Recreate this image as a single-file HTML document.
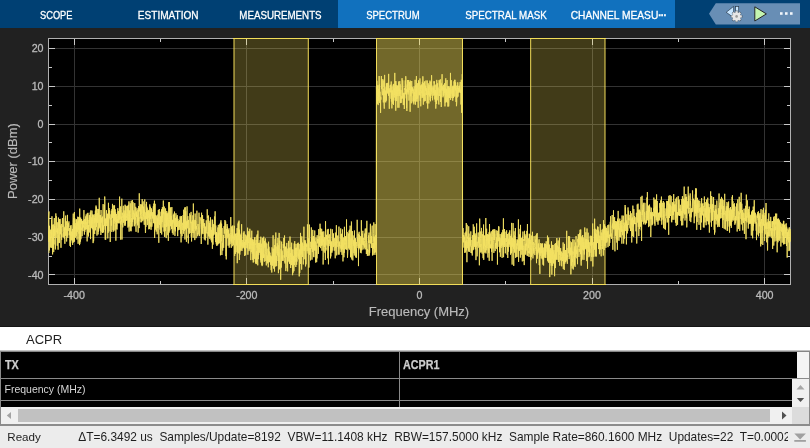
<!DOCTYPE html>
<html><head><meta charset="utf-8"><title>Spectrum Analyzer</title>
<style>
html,body{margin:0;padding:0}
body{-webkit-font-smoothing:antialiased;width:810px;height:448px;position:relative;overflow:hidden;background:#212121;font-family:"Liberation Sans",Arial,sans-serif}
.abs{position:absolute}
#status,#tbl,#acprbar,#plot,#tb{will-change:transform}
#tb{left:0;top:0;width:810px;height:28px;background:#004073}
#sel{left:338px;top:0;width:337px;height:28px;background:#1171be}
.tab{position:absolute;top:0;width:120px;height:28px;line-height:31px;text-align:center;color:#fff;font-size:11px;white-space:nowrap;-webkit-text-stroke:0.3px #fff}
.tl{display:inline-block;transform-origin:50% 50%}
#qa{left:709px;top:3px;width:91px;height:22px}
#acprbar{left:0;top:327px;width:810px;height:23px;background:#fff;color:#222;font-size:13px;line-height:25px}
#tbl{left:0;top:351px;width:810px;height:56px;background:#000}
.gl{position:absolute;background:#8a8a8a}
.cell{position:absolute;color:#d6d6d6;font-size:10.5px;white-space:nowrap}
#hs{left:1px;top:407px;width:808px;height:17px;background:#f0f0f0}
#status{left:0;top:426px;width:810px;height:22px;background:#ececec;color:#1e1e1e;font-size:11.91px;line-height:22px;white-space:nowrap}
</style></head><body>
<div class="abs" id="tb">
<div class="abs" id="sel"></div>
<span class="tab" style="left:-3.7px"><span class="tl" style="transform:scaleX(0.8439)">SCOPE</span></span>
<span class="tab" style="left:108.3px"><span class="tl" style="transform:scaleX(0.9155)">ESTIMATION</span></span>
<span class="tab" style="left:220.2px"><span class="tl" style="transform:scaleX(0.8859)">MEASUREMENTS</span></span>
<span class="tab" style="left:333.3px"><span class="tl" style="transform:scaleX(0.8651)">SPECTRUM</span></span>
<span class="tab" style="left:445.6px"><span class="tl" style="transform:scaleX(0.8869)">SPECTRAL MASK</span></span>
<span class="tab" style="left:558.6px"><span class="tl" style="transform:scaleX(0.9286)">CHANNEL MEASU<b style="letter-spacing:-0.9px">···</b></span></span>
<svg class="abs" id="qa" width="91" height="22" viewBox="709 3 91 22">
<path d="M709 13.8L715.8 3.2H800V24.5H715.8Z" fill="#688eb5"/>
<path d="M733.6 6.4L726.2 12.3L733.6 17.6Z" fill="#c8e6ff" stroke="#2a3a4a" stroke-width="0.7" stroke-linejoin="round"/>
<rect x="735.6" y="6.4" width="3.1" height="7" fill="#c8e6ff" stroke="#2a3a4a" stroke-width="0.7"/>
<g transform="translate(736.6 16.4)"><g fill="#4a5a6a" transform="scale(1.12)"><circle r="3.9"/><rect x="-1.1" y="-5.2" width="2.2" height="3" transform="rotate(0)"/><rect x="-1.1" y="-5.2" width="2.2" height="3" transform="rotate(45)"/><rect x="-1.1" y="-5.2" width="2.2" height="3" transform="rotate(90)"/><rect x="-1.1" y="-5.2" width="2.2" height="3" transform="rotate(135)"/><rect x="-1.1" y="-5.2" width="2.2" height="3" transform="rotate(180)"/><rect x="-1.1" y="-5.2" width="2.2" height="3" transform="rotate(225)"/><rect x="-1.1" y="-5.2" width="2.2" height="3" transform="rotate(270)"/><rect x="-1.1" y="-5.2" width="2.2" height="3" transform="rotate(315)"/></g><g fill="#e6e6e6"><circle r="3.9"/><rect x="-1.1" y="-5.2" width="2.2" height="3" transform="rotate(0)"/><rect x="-1.1" y="-5.2" width="2.2" height="3" transform="rotate(45)"/><rect x="-1.1" y="-5.2" width="2.2" height="3" transform="rotate(90)"/><rect x="-1.1" y="-5.2" width="2.2" height="3" transform="rotate(135)"/><rect x="-1.1" y="-5.2" width="2.2" height="3" transform="rotate(180)"/><rect x="-1.1" y="-5.2" width="2.2" height="3" transform="rotate(225)"/><rect x="-1.1" y="-5.2" width="2.2" height="3" transform="rotate(270)"/><rect x="-1.1" y="-5.2" width="2.2" height="3" transform="rotate(315)"/></g><circle r="1.3" fill="#9a9a9a"/></g>
<path d="M754.8 6.8L766.4 13.9L754.8 21Z" fill="#c4f5b0" stroke="#262626" stroke-width="1" stroke-linejoin="round"/>
<rect x="780" y="12.2" width="2.6" height="2.6" fill="#f2f6fa"/><rect x="785" y="12.2" width="2.6" height="2.6" fill="#f2f6fa"/><rect x="790" y="12.2" width="2.6" height="2.6" fill="#f2f6fa"/>
</svg>
</div>
<svg width="810" height="300" viewBox="0 28 810 300" id="plot" style="position:absolute;left:0;top:28px">
<rect x="0" y="28" width="810" height="300" fill="#212121"/>
<rect x="48" y="38" width="743" height="247" fill="#000"/>
<path d="M49 48.5H790 M49 86.5H790 M49 124.5H790 M49 161.5H790 M49 199.5H790 M49 237.5H790 M49 274.5H790 M74.5 39V284 M246.5 39V284 M419.5 39V284 M592.5 39V284 M764.5 39V284" stroke="#333333" stroke-width="1" fill="none" shape-rendering="crispEdges"/>
<path d="M49 48.5h6M790 48.5h-6 M49 67.5h3M790 67.5h-3 M49 86.5h6M790 86.5h-6 M49 105.5h3M790 105.5h-3 M49 124.5h6M790 124.5h-6 M49 142.5h3M790 142.5h-3 M49 161.5h6M790 161.5h-6 M49 180.5h3M790 180.5h-3 M49 199.5h6M790 199.5h-6 M49 218.5h3M790 218.5h-3 M49 237.5h6M790 237.5h-6 M49 256.5h3M790 256.5h-3 M49 274.5h6M790 274.5h-6 M74.5 39v6M74.5 284v-6 M160.5 39v3M160.5 284v-3 M246.5 39v6M246.5 284v-6 M333.5 39v3M333.5 284v-3 M419.5 39v6M419.5 284v-6 M505.5 39v3M505.5 284v-3 M592.5 39v6M592.5 284v-6 M678.5 39v3M678.5 284v-3 M764.5 39v6M764.5 284v-6" stroke="#c8c8c8" stroke-width="1" fill="none" shape-rendering="crispEdges"/>
<rect x="234" y="38.5" width="74.3" height="246" fill="#f2dd5a" fill-opacity="0.265"/>
<rect x="530.65" y="38.5" width="74.35" height="246" fill="#f2dd5a" fill-opacity="0.265"/>
<rect x="376.5" y="38.5" width="86" height="246" fill="#f2dd5a" fill-opacity="0.47"/>
<path d="M48.5 38.5H790.5V284.5H48.5Z" stroke="#b0b0b0" stroke-width="1" fill="none" shape-rendering="crispEdges"/>
<path d="M234 284.5V38.5M308.3 38.5V284.5M530.65 284.5V38.5M605 38.5V284.5" stroke="#f2dd5a" stroke-opacity="0.95" stroke-width="1.05" fill="none"/>
<path d="M233 38.5H309M530 38.5H606M233 284.5H309M530 284.5H606" stroke="#f2dd5a" stroke-width="1" fill="none" shape-rendering="crispEdges"/>
<path d="M376.5 284.5V38.5H462.5V284.5Z" stroke="#f2dd5a" stroke-width="1" fill="none" shape-rendering="crispEdges"/>
<clipPath id="cp"><rect x="48" y="39" width="743" height="245"/></clipPath>
<path d="M49 253 L49 211.5 L48.24 220.1 L48.40 239.2 L48.56 234.8 L48.73 231.4 L48.89 242.0 L49.05 234.9 L49.21 234.9 L49.37 250.4 L49.53 225.8 L49.69 229.5 L49.86 240.3 L50.02 236.2 L50.18 230.2 L50.34 237.0 L50.50 236.8 L50.66 247.4 L50.82 229.6 L50.98 233.4 L51.15 232.0 L51.31 247.9 L51.47 219.7 L51.63 233.0 L51.79 237.7 L51.95 216.3 L52.11 234.6 L52.28 247.0 L52.44 237.7 L52.60 254.4 L52.76 224.8 L52.92 237.7 L53.08 240.6 L53.24 224.4 L53.41 248.5 L53.57 229.1 L53.73 252.1 L53.89 239.7 L54.05 244.4 L54.21 220.8 L54.37 218.0 L54.54 236.6 L54.70 226.1 L54.86 235.1 L55.02 228.5 L55.18 240.1 L55.34 248.6 L55.50 249.4 L55.67 230.0 L55.83 213.4 L55.99 230.9 L56.15 237.9 L56.31 216.2 L56.47 231.1 L56.63 232.2 L56.80 230.8 L56.96 234.2 L57.12 235.7 L57.28 245.7 L57.44 228.5 L57.60 233.7 L57.76 222.3 L57.93 236.1 L58.09 249.7 L58.25 233.6 L58.41 217.6 L58.57 236.0 L58.73 240.5 L58.89 243.1 L59.06 241.8 L59.22 235.1 L59.38 242.9 L59.54 219.1 L59.70 234.9 L59.86 231.3 L60.02 219.5 L60.19 218.9 L60.35 234.1 L60.51 229.2 L60.67 225.6 L60.83 233.8 L60.99 247.8 L61.15 226.2 L61.32 224.0 L61.48 228.2 L61.64 240.0 L61.80 233.6 L61.96 237.0 L62.12 234.4 L62.28 220.2 L62.44 218.1 L62.61 225.7 L62.77 226.7 L62.93 225.5 L63.09 231.6 L63.25 232.1 L63.41 237.4 L63.57 231.9 L63.74 211.3 L63.90 223.6 L64.06 234.3 L64.22 235.4 L64.38 238.8 L64.54 227.8 L64.70 227.6 L64.87 243.8 L65.03 226.7 L65.19 236.0 L65.35 218.3 L65.51 229.5 L65.67 215.6 L65.83 234.8 L66.00 233.3 L66.16 228.0 L66.32 221.3 L66.48 225.6 L66.64 241.5 L66.80 228.9 L66.96 230.3 L67.13 234.2 L67.29 236.1 L67.45 214.9 L67.61 233.8 L67.77 237.8 L67.93 224.6 L68.09 229.0 L68.26 230.8 L68.42 223.2 L68.58 225.7 L68.74 226.8 L68.90 221.4 L69.06 227.4 L69.22 235.3 L69.39 233.0 L69.55 234.4 L69.71 227.9 L69.87 239.3 L70.03 245.9 L70.19 228.8 L70.35 241.4 L70.52 246.8 L70.68 226.2 L70.84 235.7 L71.00 225.0 L71.16 234.1 L71.32 239.3 L71.48 240.3 L71.65 233.8 L71.81 231.6 L71.97 236.4 L72.13 231.6 L72.29 242.7 L72.45 228.9 L72.61 244.9 L72.78 230.6 L72.94 222.7 L73.10 219.1 L73.26 213.6 L73.42 242.5 L73.58 222.0 L73.74 218.0 L73.90 219.9 L74.07 236.8 L74.23 224.9 L74.39 212.0 L74.55 241.7 L74.71 224.2 L74.87 218.5 L75.03 234.5 L75.20 223.1 L75.36 237.7 L75.52 235.4 L75.68 235.4 L75.84 226.4 L76.00 228.8 L76.16 219.5 L76.33 236.3 L76.49 229.0 L76.65 219.3 L76.81 222.8 L76.97 239.5 L77.13 221.8 L77.29 231.9 L77.46 224.2 L77.62 224.9 L77.78 216.7 L77.94 226.4 L78.10 243.8 L78.26 239.5 L78.42 220.8 L78.59 229.5 L78.75 217.1 L78.91 224.7 L79.07 233.7 L79.23 217.5 L79.39 234.2 L79.55 245.1 L79.72 208.6 L79.88 243.8 L80.04 221.2 L80.20 218.4 L80.36 225.4 L80.52 241.6 L80.68 217.6 L80.85 239.3 L81.01 238.4 L81.17 229.6 L81.33 219.4 L81.49 223.7 L81.65 219.1 L81.81 230.2 L81.98 227.7 L82.14 236.2 L82.30 228.9 L82.46 220.8 L82.62 228.6 L82.78 221.7 L82.94 231.0 L83.11 231.1 L83.27 225.4 L83.43 227.4 L83.59 220.4 L83.75 224.0 L83.91 210.1 L84.07 227.5 L84.24 227.5 L84.40 234.6 L84.56 225.2 L84.72 219.2 L84.88 231.8 L85.04 225.6 L85.20 218.8 L85.36 226.2 L85.53 229.6 L85.69 216.4 L85.85 224.1 L86.01 221.4 L86.17 214.4 L86.33 214.6 L86.49 227.8 L86.66 229.3 L86.82 222.1 L86.98 225.7 L87.14 241.4 L87.30 213.2 L87.46 224.2 L87.62 217.8 L87.79 234.7 L87.95 212.8 L88.11 229.4 L88.27 225.1 L88.43 236.5 L88.59 225.5 L88.75 226.0 L88.92 225.6 L89.08 220.0 L89.24 223.3 L89.40 215.1 L89.56 227.9 L89.72 232.5 L89.88 223.8 L90.05 218.0 L90.21 212.5 L90.37 216.3 L90.53 239.1 L90.69 220.0 L90.85 210.4 L91.01 222.7 L91.18 227.8 L91.34 220.4 L91.50 227.6 L91.66 217.4 L91.82 223.1 L91.98 210.6 L92.14 218.5 L92.31 229.3 L92.47 217.5 L92.63 214.5 L92.79 227.8 L92.95 226.4 L93.11 243.1 L93.27 214.6 L93.44 227.7 L93.60 241.3 L93.76 238.1 L93.92 224.3 L94.08 215.6 L94.24 223.1 L94.40 218.0 L94.57 231.9 L94.73 234.0 L94.89 214.2 L95.05 217.7 L95.21 222.3 L95.37 210.6 L95.53 230.3 L95.70 225.6 L95.86 212.7 L96.02 205.5 L96.18 221.6 L96.34 206.8 L96.50 227.0 L96.66 218.6 L96.82 223.1 L96.99 235.6 L97.15 219.1 L97.31 213.1 L97.47 222.7 L97.63 221.9 L97.79 208.9 L97.95 232.3 L98.12 234.4 L98.28 226.9 L98.44 231.7 L98.60 209.1 L98.76 218.2 L98.92 228.6 L99.08 226.4 L99.25 197.8 L99.41 226.2 L99.57 227.5 L99.73 218.0 L99.89 215.0 L100.05 218.7 L100.21 228.7 L100.38 230.8 L100.54 215.2 L100.70 221.0 L100.86 235.0 L101.02 210.0 L101.18 213.5 L101.34 222.5 L101.51 222.6 L101.67 218.2 L101.83 226.3 L101.99 232.1 L102.15 217.3 L102.31 232.9 L102.47 216.6 L102.64 232.8 L102.80 220.9 L102.96 221.2 L103.12 204.1 L103.28 229.3 L103.44 232.4 L103.60 225.5 L103.77 229.7 L103.93 224.9 L104.09 215.9 L104.25 212.8 L104.41 204.9 L104.57 226.1 L104.73 196.5 L104.90 201.9 L105.06 221.2 L105.22 239.7 L105.38 220.1 L105.54 218.7 L105.70 239.7 L105.86 218.6 L106.03 221.0 L106.19 226.1 L106.35 213.6 L106.51 210.2 L106.67 223.3 L106.83 216.9 L106.99 224.7 L107.16 225.9 L107.32 218.2 L107.48 214.2 L107.64 223.8 L107.80 238.4 L107.96 213.5 L108.12 232.8 L108.28 217.5 L108.45 202.8 L108.61 218.7 L108.77 229.0 L108.93 231.4 L109.09 208.0 L109.25 218.5 L109.41 213.5 L109.58 210.1 L109.74 218.7 L109.90 220.9 L110.06 226.5 L110.22 242.0 L110.38 231.5 L110.54 218.6 L110.71 219.5 L110.87 214.4 L111.03 219.0 L111.19 216.4 L111.35 210.8 L111.51 225.6 L111.67 220.3 L111.84 231.9 L112.00 209.0 L112.16 217.3 L112.32 213.2 L112.48 203.9 L112.64 207.9 L112.80 218.0 L112.97 210.4 L113.13 230.1 L113.29 213.5 L113.45 216.1 L113.61 231.6 L113.77 205.4 L113.93 223.4 L114.10 211.1 L114.26 220.8 L114.42 208.3 L114.58 205.4 L114.74 224.3 L114.90 230.5 L115.06 218.1 L115.23 209.3 L115.39 220.1 L115.55 222.2 L115.71 212.4 L115.87 240.7 L116.03 222.6 L116.19 228.9 L116.36 214.0 L116.52 223.1 L116.68 226.4 L116.84 219.6 L117.00 229.5 L117.16 216.6 L117.32 222.5 L117.49 219.7 L117.65 222.7 L117.81 208.2 L117.97 217.2 L118.13 211.6 L118.29 212.0 L118.45 223.3 L118.62 211.1 L118.78 213.0 L118.94 213.3 L119.10 219.6 L119.26 219.8 L119.42 209.0 L119.58 196.6 L119.74 223.3 L119.91 211.2 L120.07 219.1 L120.23 208.9 L120.39 211.9 L120.55 206.4 L120.71 239.7 L120.87 221.1 L121.04 224.5 L121.20 216.6 L121.36 222.1 L121.52 221.3 L121.68 209.5 L121.84 198.7 L122.00 239.5 L122.17 218.3 L122.33 212.7 L122.49 215.4 L122.65 218.5 L122.81 227.4 L122.97 223.8 L123.13 209.0 L123.30 205.8 L123.46 214.5 L123.62 222.7 L123.78 214.5 L123.94 217.4 L124.10 210.4 L124.26 214.2 L124.43 220.7 L124.59 213.5 L124.75 225.6 L124.91 207.9 L125.07 204.7 L125.23 225.6 L125.39 211.4 L125.56 223.9 L125.72 205.6 L125.88 207.1 L126.04 217.1 L126.20 206.2 L126.36 218.9 L126.52 220.7 L126.69 220.1 L126.85 216.3 L127.01 217.9 L127.17 213.6 L127.33 220.4 L127.49 208.2 L127.65 205.9 L127.82 219.4 L127.98 227.6 L128.14 208.5 L128.30 204.9 L128.46 216.4 L128.62 226.4 L128.78 212.6 L128.95 201.4 L129.11 231.6 L129.27 210.7 L129.43 217.7 L129.59 222.5 L129.75 210.5 L129.91 226.5 L130.08 212.3 L130.24 203.3 L130.40 213.4 L130.56 222.7 L130.72 230.7 L130.88 226.3 L131.04 231.3 L131.20 200.8 L131.37 217.2 L131.53 224.2 L131.69 226.5 L131.85 224.4 L132.01 218.0 L132.17 226.4 L132.33 200.1 L132.50 221.6 L132.66 222.0 L132.82 212.3 L132.98 202.2 L133.14 203.3 L133.30 219.4 L133.46 212.8 L133.63 213.7 L133.79 210.4 L133.95 212.8 L134.11 223.5 L134.27 226.3 L134.43 213.6 L134.59 225.6 L134.76 203.1 L134.92 214.8 L135.08 224.3 L135.24 218.0 L135.40 219.7 L135.56 216.4 L135.72 206.8 L135.89 228.0 L136.05 231.8 L136.21 212.3 L136.37 216.8 L136.53 213.8 L136.69 211.4 L136.85 216.9 L137.02 208.2 L137.18 223.3 L137.34 214.8 L137.50 222.7 L137.66 225.4 L137.82 209.9 L137.98 210.4 L138.15 232.6 L138.31 225.4 L138.47 212.9 L138.63 206.0 L138.79 221.4 L138.95 217.2 L139.11 228.1 L139.28 193.3 L139.44 211.4 L139.60 207.7 L139.76 209.8 L139.92 207.4 L140.08 210.3 L140.24 218.6 L140.41 209.1 L140.57 215.0 L140.73 204.2 L140.89 222.3 L141.05 220.6 L141.21 209.9 L141.37 204.5 L141.54 214.6 L141.70 222.2 L141.86 216.9 L142.02 220.3 L142.18 199.1 L142.34 208.0 L142.50 204.8 L142.66 213.3 L142.83 220.9 L142.99 205.7 L143.15 201.4 L143.31 210.9 L143.47 216.3 L143.63 206.6 L143.79 219.5 L143.96 209.4 L144.12 222.5 L144.28 224.8 L144.44 211.2 L144.60 213.3 L144.76 199.4 L144.92 218.8 L145.09 216.2 L145.25 226.5 L145.41 233.0 L145.57 232.2 L145.73 212.4 L145.89 226.9 L146.05 206.5 L146.22 203.9 L146.38 219.1 L146.54 201.9 L146.70 214.6 L146.86 206.7 L147.02 218.7 L147.18 208.2 L147.35 225.1 L147.51 211.3 L147.67 220.9 L147.83 218.0 L147.99 211.3 L148.15 215.4 L148.31 217.6 L148.48 210.5 L148.64 209.9 L148.80 229.3 L148.96 212.1 L149.12 211.1 L149.28 223.8 L149.44 213.7 L149.61 228.9 L149.77 204.4 L149.93 219.3 L150.09 217.9 L150.25 206.7 L150.41 218.6 L150.57 212.0 L150.74 226.6 L150.90 222.4 L151.06 229.8 L151.22 219.3 L151.38 208.3 L151.54 215.5 L151.70 209.7 L151.87 226.7 L152.03 225.4 L152.19 221.8 L152.35 212.6 L152.51 214.5 L152.67 217.9 L152.83 212.2 L153.00 219.1 L153.16 218.0 L153.32 206.3 L153.48 223.1 L153.64 216.3 L153.80 203.6 L153.96 217.1 L154.12 211.7 L154.29 223.4 L154.45 200.7 L154.61 238.0 L154.77 228.2 L154.93 227.5 L155.09 203.8 L155.25 215.1 L155.42 220.6 L155.58 229.6 L155.74 215.1 L155.90 217.3 L156.06 224.5 L156.22 231.6 L156.38 228.2 L156.55 216.6 L156.71 215.7 L156.87 217.9 L157.03 219.9 L157.19 234.3 L157.35 218.2 L157.51 227.8 L157.68 218.3 L157.84 214.6 L158.00 224.7 L158.16 227.8 L158.32 210.0 L158.48 215.7 L158.64 224.5 L158.81 242.8 L158.97 219.4 L159.13 213.4 L159.29 209.0 L159.45 225.0 L159.61 224.8 L159.77 223.0 L159.94 211.7 L160.10 229.6 L160.26 220.2 L160.42 227.4 L160.58 216.9 L160.74 233.0 L160.90 216.0 L161.07 223.7 L161.23 221.3 L161.39 214.7 L161.55 209.3 L161.71 234.5 L161.87 210.6 L162.03 214.6 L162.20 222.1 L162.36 207.1 L162.52 217.9 L162.68 208.2 L162.84 224.9 L163.00 227.4 L163.16 208.9 L163.33 200.6 L163.49 214.1 L163.65 211.9 L163.81 224.0 L163.97 231.6 L164.13 221.9 L164.29 206.6 L164.46 236.4 L164.62 224.4 L164.78 237.0 L164.94 219.1 L165.10 212.3 L165.26 231.1 L165.42 223.7 L165.59 208.4 L165.75 221.0 L165.91 231.2 L166.07 231.9 L166.23 238.1 L166.39 213.4 L166.55 226.9 L166.71 211.0 L166.88 212.7 L167.04 226.3 L167.20 225.1 L167.36 213.6 L167.52 219.2 L167.68 218.2 L167.84 235.2 L168.01 212.6 L168.17 228.4 L168.33 240.8 L168.49 226.2 L168.65 217.0 L168.81 202.2 L168.97 224.1 L169.14 232.6 L169.30 202.0 L169.46 219.5 L169.62 223.2 L169.78 230.5 L169.94 229.9 L170.10 207.9 L170.27 223.5 L170.43 225.9 L170.59 225.6 L170.75 207.3 L170.91 226.4 L171.07 215.7 L171.23 218.9 L171.40 219.2 L171.56 229.1 L171.72 215.5 L171.88 207.1 L172.04 221.9 L172.20 229.6 L172.36 232.9 L172.53 219.8 L172.69 224.0 L172.85 222.5 L173.01 221.5 L173.17 234.7 L173.33 214.8 L173.49 219.7 L173.66 222.4 L173.82 219.7 L173.98 213.6 L174.14 221.4 L174.30 229.4 L174.46 211.6 L174.62 225.8 L174.79 228.4 L174.95 235.9 L175.11 222.0 L175.27 231.4 L175.43 226.8 L175.59 218.2 L175.75 221.9 L175.92 213.3 L176.08 219.6 L176.24 225.9 L176.40 225.3 L176.56 226.9 L176.72 216.7 L176.88 222.3 L177.05 226.2 L177.21 215.1 L177.37 221.7 L177.53 226.8 L177.69 236.1 L177.85 218.8 L178.01 220.6 L178.17 222.3 L178.34 226.7 L178.50 230.2 L178.66 224.9 L178.82 220.9 L178.98 224.1 L179.14 224.3 L179.30 227.2 L179.47 220.1 L179.63 221.0 L179.79 229.8 L179.95 216.5 L180.11 216.2 L180.27 216.1 L180.43 224.5 L180.60 225.1 L180.76 233.7 L180.92 216.7 L181.08 242.4 L181.24 227.0 L181.40 226.6 L181.56 216.0 L181.73 223.6 L181.89 232.2 L182.05 236.3 L182.21 230.2 L182.37 222.8 L182.53 223.3 L182.69 225.6 L182.86 230.0 L183.02 225.8 L183.18 215.1 L183.34 233.8 L183.50 223.7 L183.66 209.7 L183.82 219.2 L183.99 228.2 L184.15 218.3 L184.31 230.9 L184.47 224.2 L184.63 210.5 L184.79 207.6 L184.95 239.5 L185.12 218.2 L185.28 207.2 L185.44 229.4 L185.60 222.3 L185.76 211.2 L185.92 229.0 L186.08 220.7 L186.25 225.2 L186.41 241.8 L186.57 221.7 L186.73 226.5 L186.89 216.7 L187.05 206.4 L187.21 218.9 L187.38 228.3 L187.54 221.1 L187.70 223.3 L187.86 216.1 L188.02 237.9 L188.18 235.5 L188.34 243.4 L188.51 219.9 L188.67 225.5 L188.83 231.0 L188.99 231.8 L189.15 230.5 L189.31 233.7 L189.47 228.4 L189.63 230.0 L189.80 213.3 L189.96 222.8 L190.12 233.0 L190.28 230.9 L190.44 215.2 L190.60 221.8 L190.76 223.2 L190.93 219.5 L191.09 211.9 L191.25 236.8 L191.41 232.6 L191.57 241.5 L191.73 221.7 L191.89 229.5 L192.06 232.2 L192.22 233.0 L192.38 220.2 L192.54 227.6 L192.70 231.1 L192.86 215.3 L193.02 235.7 L193.19 237.7 L193.35 203.5 L193.51 229.8 L193.67 231.4 L193.83 233.1 L193.99 227.9 L194.15 219.8 L194.32 220.1 L194.48 222.0 L194.64 229.3 L194.80 240.1 L194.96 224.4 L195.12 213.5 L195.28 217.6 L195.45 228.6 L195.61 220.0 L195.77 230.6 L195.93 227.7 L196.09 238.2 L196.25 230.1 L196.41 226.1 L196.58 228.9 L196.74 220.6 L196.90 210.7 L197.06 215.8 L197.22 230.2 L197.38 234.1 L197.54 233.4 L197.71 236.3 L197.87 227.4 L198.03 224.0 L198.19 226.2 L198.35 226.1 L198.51 226.5 L198.67 229.1 L198.84 234.5 L199.00 212.7 L199.16 218.7 L199.32 236.1 L199.48 236.1 L199.64 233.4 L199.80 227.9 L199.97 217.1 L200.13 219.3 L200.29 218.9 L200.45 218.7 L200.61 218.6 L200.77 221.9 L200.93 224.5 L201.09 229.6 L201.26 244.0 L201.42 229.8 L201.58 212.7 L201.74 233.5 L201.90 234.3 L202.06 219.8 L202.22 228.1 L202.39 233.1 L202.55 215.1 L202.71 223.4 L202.87 222.3 L203.03 234.0 L203.19 224.7 L203.35 225.8 L203.52 222.3 L203.68 219.0 L203.84 219.3 L204.00 227.8 L204.16 223.2 L204.32 239.5 L204.48 223.7 L204.65 223.4 L204.81 232.9 L204.97 236.4 L205.13 230.1 L205.29 240.4 L205.45 226.6 L205.61 227.1 L205.78 238.1 L205.94 229.4 L206.10 220.4 L206.26 220.4 L206.42 220.9 L206.58 231.3 L206.74 233.0 L206.91 233.5 L207.07 224.8 L207.23 209.3 L207.39 217.7 L207.55 216.1 L207.71 218.3 L207.87 244.6 L208.04 232.1 L208.20 234.2 L208.36 219.3 L208.52 215.5 L208.68 236.4 L208.84 230.2 L209.00 225.6 L209.17 234.9 L209.33 236.2 L209.49 236.7 L209.65 222.9 L209.81 238.8 L209.97 220.8 L210.13 230.1 L210.30 224.3 L210.46 217.3 L210.62 236.9 L210.78 238.3 L210.94 227.3 L211.10 240.3 L211.26 237.6 L211.43 232.2 L211.59 229.9 L211.75 242.3 L211.91 234.7 L212.07 226.2 L212.23 219.5 L212.39 248.8 L212.55 220.0 L212.72 223.8 L212.88 241.2 L213.04 244.6 L213.20 228.0 L213.36 235.4 L213.52 230.6 L213.68 224.2 L213.85 235.1 L214.01 230.5 L214.17 227.7 L214.33 224.1 L214.49 216.5 L214.65 217.1 L214.81 230.0 L214.98 234.2 L215.14 211.3 L215.30 226.6 L215.46 228.5 L215.62 242.1 L215.78 225.5 L215.94 239.3 L216.11 236.5 L216.27 244.3 L216.43 237.1 L216.59 232.1 L216.75 245.9 L216.91 240.6 L217.07 233.4 L217.24 243.9 L217.40 243.9 L217.56 240.2 L217.72 245.3 L217.88 227.5 L218.04 241.8 L218.20 226.3 L218.37 224.9 L218.53 243.7 L218.69 232.8 L218.85 237.5 L219.01 243.3 L219.17 236.3 L219.33 235.5 L219.50 227.1 L219.66 224.4 L219.82 243.2 L219.98 237.1 L220.14 228.9 L220.30 223.2 L220.46 255.3 L220.63 222.4 L220.79 235.3 L220.95 220.3 L221.11 237.6 L221.27 241.3 L221.43 233.6 L221.59 223.7 L221.76 233.8 L221.92 255.0 L222.08 228.1 L222.24 248.4 L222.40 242.9 L222.56 244.6 L222.72 250.6 L222.89 245.5 L223.05 243.2 L223.21 239.9 L223.37 235.0 L223.53 237.6 L223.69 247.8 L223.85 236.3 L224.01 226.1 L224.18 226.4 L224.34 233.6 L224.50 229.4 L224.66 227.0 L224.82 222.9 L224.98 220.0 L225.14 237.9 L225.31 237.5 L225.47 222.1 L225.63 221.4 L225.79 221.6 L225.95 256.1 L226.11 237.3 L226.27 259.4 L226.44 229.0 L226.60 235.0 L226.76 235.1 L226.92 236.9 L227.08 224.1 L227.24 238.3 L227.40 226.6 L227.57 230.9 L227.73 232.7 L227.89 231.8 L228.05 235.0 L228.21 245.7 L228.37 229.8 L228.53 229.8 L228.70 237.5 L228.86 229.8 L229.02 228.3 L229.18 247.7 L229.34 237.7 L229.50 240.4 L229.66 244.5 L229.83 233.7 L229.99 244.1 L230.15 240.5 L230.31 234.6 L230.47 233.7 L230.63 234.0 L230.79 217.1 L230.96 241.4 L231.12 234.8 L231.28 247.8 L231.44 232.8 L231.60 226.9 L231.76 226.5 L231.92 242.9 L232.09 239.8 L232.25 226.2 L232.41 238.3 L232.57 229.0 L232.73 246.2 L232.89 225.4 L233.05 228.6 L233.22 233.6 L233.38 244.9 L233.54 239.3 L233.70 236.6 L233.86 235.6 L234.02 238.9 L234.18 240.0 L234.35 236.4 L234.51 225.8 L234.67 256.0 L234.83 250.5 L234.99 252.1 L235.15 244.5 L235.31 253.9 L235.47 233.7 L235.64 237.8 L235.80 240.9 L235.96 244.8 L236.12 237.4 L236.28 237.3 L236.44 236.0 L236.60 245.5 L236.77 233.3 L236.93 252.2 L237.09 228.1 L237.25 263.2 L237.41 244.6 L237.57 250.1 L237.73 232.5 L237.90 252.7 L238.06 223.5 L238.22 253.4 L238.38 221.8 L238.54 235.9 L238.70 239.6 L238.86 236.1 L239.03 220.6 L239.19 232.2 L239.35 260.0 L239.51 229.7 L239.67 238.3 L239.83 254.7 L239.99 233.7 L240.16 251.3 L240.32 239.0 L240.48 238.6 L240.64 246.5 L240.80 235.1 L240.96 250.0 L241.12 239.3 L241.29 245.9 L241.45 242.8 L241.61 224.2 L241.77 240.3 L241.93 251.0 L242.09 242.5 L242.25 248.4 L242.42 241.4 L242.58 240.3 L242.74 241.0 L242.90 241.1 L243.06 246.8 L243.22 238.0 L243.38 232.7 L243.55 247.7 L243.71 242.8 L243.87 241.8 L244.03 231.3 L244.19 232.9 L244.35 249.0 L244.51 242.0 L244.68 256.0 L244.84 251.4 L245.00 242.8 L245.16 237.4 L245.32 234.6 L245.48 245.9 L245.64 255.2 L245.81 239.8 L245.97 244.9 L246.13 239.7 L246.29 242.1 L246.45 237.3 L246.61 237.9 L246.77 236.3 L246.93 247.9 L247.10 235.1 L247.26 248.5 L247.42 243.4 L247.58 227.7 L247.74 241.1 L247.90 254.7 L248.06 231.2 L248.23 235.6 L248.39 234.5 L248.55 242.9 L248.71 241.7 L248.87 246.9 L249.03 251.1 L249.19 231.4 L249.36 248.3 L249.52 249.4 L249.68 249.2 L249.84 228.8 L250.00 237.6 L250.16 248.7 L250.32 245.9 L250.49 241.1 L250.65 237.9 L250.81 260.1 L250.97 237.8 L251.13 247.9 L251.29 252.1 L251.45 249.6 L251.62 239.2 L251.78 230.7 L251.94 245.0 L252.10 241.5 L252.26 253.7 L252.42 242.2 L252.58 239.3 L252.75 259.9 L252.91 251.3 L253.07 239.8 L253.23 262.5 L253.39 250.3 L253.55 241.8 L253.71 262.1 L253.88 250.7 L254.04 246.8 L254.20 239.5 L254.36 258.8 L254.52 237.7 L254.68 244.9 L254.84 237.1 L255.01 237.4 L255.17 244.8 L255.33 243.6 L255.49 263.4 L255.65 260.0 L255.81 257.0 L255.97 251.2 L256.14 240.0 L256.30 264.1 L256.46 251.2 L256.62 260.1 L256.78 262.3 L256.94 235.5 L257.10 247.8 L257.27 234.2 L257.43 238.3 L257.59 257.0 L257.75 265.3 L257.91 230.6 L258.07 252.6 L258.23 259.2 L258.39 243.0 L258.56 248.0 L258.72 255.2 L258.88 252.4 L259.04 248.0 L259.20 248.8 L259.36 242.8 L259.52 252.7 L259.69 252.7 L259.85 244.4 L260.01 247.0 L260.17 240.1 L260.33 252.1 L260.49 250.8 L260.65 260.2 L260.82 236.7 L260.98 262.5 L261.14 248.4 L261.30 258.1 L261.46 247.3 L261.62 243.7 L261.78 264.9 L261.95 252.3 L262.11 266.1 L262.27 238.1 L262.43 254.6 L262.59 264.7 L262.75 257.0 L262.91 239.2 L263.08 237.7 L263.24 239.7 L263.40 258.0 L263.56 252.4 L263.72 236.7 L263.88 257.7 L264.04 254.3 L264.21 259.8 L264.37 261.7 L264.53 240.8 L264.69 246.0 L264.85 247.6 L265.01 246.5 L265.17 242.7 L265.34 238.4 L265.50 251.9 L265.66 255.0 L265.82 261.1 L265.98 242.5 L266.14 256.7 L266.30 265.4 L266.47 254.6 L266.63 252.1 L266.79 245.0 L266.95 243.6 L267.11 259.0 L267.27 259.7 L267.43 255.6 L267.60 263.4 L267.76 253.7 L267.92 248.7 L268.08 252.5 L268.24 267.3 L268.40 263.6 L268.56 241.7 L268.73 262.1 L268.89 246.7 L269.05 247.7 L269.21 256.2 L269.37 262.2 L269.53 251.6 L269.69 261.4 L269.85 255.1 L270.02 252.7 L270.18 260.0 L270.34 255.8 L270.50 256.5 L270.66 264.8 L270.82 255.6 L270.98 259.6 L271.15 270.2 L271.31 257.1 L271.47 256.6 L271.63 259.6 L271.79 272.5 L271.95 247.4 L272.11 248.3 L272.28 248.6 L272.44 251.6 L272.60 265.7 L272.76 253.5 L272.92 262.8 L273.08 235.3 L273.24 259.3 L273.41 248.8 L273.57 268.6 L273.73 265.3 L273.89 259.7 L274.05 248.7 L274.21 250.1 L274.37 252.5 L274.54 271.5 L274.70 245.1 L274.86 263.4 L275.02 240.9 L275.18 238.7 L275.34 248.0 L275.50 246.6 L275.67 266.5 L275.83 232.5 L275.99 253.5 L276.15 246.6 L276.31 263.1 L276.47 256.1 L276.63 266.1 L276.80 257.7 L276.96 255.5 L277.12 253.4 L277.28 243.3 L277.44 251.5 L277.60 253.6 L277.76 255.4 L277.93 238.0 L278.09 261.0 L278.25 245.3 L278.41 273.2 L278.57 263.7 L278.73 252.3 L278.89 257.3 L279.06 232.9 L279.22 233.1 L279.38 269.4 L279.54 265.5 L279.70 257.3 L279.86 240.6 L280.02 245.9 L280.19 253.1 L280.35 268.6 L280.51 263.5 L280.67 279.8 L280.83 269.7 L280.99 252.3 L281.15 249.0 L281.31 267.6 L281.48 255.1 L281.64 241.6 L281.80 254.6 L281.96 258.7 L282.12 250.6 L282.28 251.3 L282.44 255.3 L282.61 260.7 L282.77 259.7 L282.93 255.2 L283.09 260.8 L283.25 244.1 L283.41 248.0 L283.57 246.3 L283.74 237.9 L283.90 241.9 L284.06 243.3 L284.22 252.6 L284.38 257.6 L284.54 235.5 L284.70 261.8 L284.87 261.3 L285.03 263.5 L285.19 253.9 L285.35 252.1 L285.51 246.6 L285.67 257.7 L285.83 271.1 L286.00 252.9 L286.16 247.0 L286.32 255.4 L286.48 256.8 L286.64 250.6 L286.80 242.9 L286.96 256.1 L287.13 268.1 L287.29 260.5 L287.45 256.9 L287.61 271.4 L287.77 248.6 L287.93 262.2 L288.09 250.9 L288.26 253.6 L288.42 258.1 L288.58 240.9 L288.74 260.2 L288.90 261.2 L289.06 252.6 L289.22 247.7 L289.39 255.1 L289.55 263.8 L289.71 248.9 L289.87 249.7 L290.03 236.6 L290.19 256.9 L290.35 253.0 L290.52 259.9 L290.68 268.0 L290.84 254.2 L291.00 247.2 L291.16 263.7 L291.32 260.7 L291.48 265.1 L291.65 242.7 L291.81 260.2 L291.97 249.4 L292.13 262.2 L292.29 253.8 L292.45 260.0 L292.61 275.2 L292.77 253.7 L292.94 249.6 L293.10 272.7 L293.26 255.8 L293.42 258.0 L293.58 263.7 L293.74 256.3 L293.90 271.2 L294.07 251.8 L294.23 243.4 L294.39 265.1 L294.55 254.4 L294.71 241.2 L294.87 252.7 L295.03 258.3 L295.20 261.7 L295.36 252.1 L295.52 254.8 L295.68 247.9 L295.84 267.0 L296.00 243.9 L296.16 257.0 L296.33 247.7 L296.49 259.7 L296.65 264.8 L296.81 258.2 L296.97 261.6 L297.13 256.4 L297.29 247.3 L297.46 243.4 L297.62 251.2 L297.78 257.7 L297.94 256.9 L298.10 247.6 L298.26 242.7 L298.42 255.6 L298.59 253.8 L298.75 259.3 L298.91 250.7 L299.07 244.0 L299.23 276.4 L299.39 250.1 L299.55 257.2 L299.72 272.9 L299.88 249.4 L300.04 252.9 L300.20 248.7 L300.36 264.0 L300.52 232.9 L300.68 250.8 L300.85 254.7 L301.01 238.1 L301.17 245.7 L301.33 244.0 L301.49 241.0 L301.65 269.6 L301.81 236.3 L301.98 254.1 L302.14 248.4 L302.30 242.6 L302.46 257.0 L302.62 247.8 L302.78 243.7 L302.94 250.8 L303.11 245.9 L303.27 264.4 L303.43 260.6 L303.59 260.2 L303.75 246.6 L303.91 226.7 L304.07 247.3 L304.23 250.8 L304.40 250.0 L304.56 240.6 L304.72 242.9 L304.88 259.2 L305.04 240.0 L305.20 249.1 L305.36 241.5 L305.53 266.4 L305.69 262.3 L305.85 243.1 L306.01 264.3 L306.17 244.8 L306.33 245.1 L306.49 246.7 L306.66 244.7 L306.82 245.4 L306.98 243.7 L307.14 251.2 L307.30 247.7 L307.46 224.4 L307.62 237.2 L307.79 241.8 L307.95 243.7 L308.11 253.5 L308.27 244.9 L308.43 249.1 L308.59 238.4 L308.75 254.8 L308.92 267.6 L309.08 251.5 L309.24 240.3 L309.40 224.6 L309.56 237.2 L309.72 254.9 L309.88 248.1 L310.05 254.5 L310.21 247.7 L310.37 253.9 L310.53 260.4 L310.69 241.8 L310.85 244.0 L311.01 247.1 L311.18 242.5 L311.34 227.4 L311.50 244.4 L311.66 248.7 L311.82 237.5 L311.98 259.7 L312.14 238.4 L312.31 251.8 L312.47 252.1 L312.63 243.8 L312.79 229.9 L312.95 251.3 L313.11 236.1 L313.27 241.1 L313.44 256.7 L313.60 236.2 L313.76 251.6 L313.92 257.2 L314.08 251.1 L314.24 250.5 L314.40 238.7 L314.57 250.3 L314.73 230.5 L314.89 241.7 L315.05 250.0 L315.21 250.9 L315.37 241.4 L315.53 261.4 L315.69 262.6 L315.86 251.1 L316.02 237.6 L316.18 241.5 L316.34 242.8 L316.50 244.8 L316.66 262.1 L316.82 245.6 L316.99 258.4 L317.15 235.2 L317.31 242.6 L317.47 243.3 L317.63 238.9 L317.79 239.5 L317.95 240.2 L318.12 239.1 L318.28 247.3 L318.44 253.9 L318.60 239.0 L318.76 229.1 L318.92 232.9 L319.08 243.7 L319.25 236.3 L319.41 245.6 L319.57 238.2 L319.73 246.9 L319.89 240.2 L320.05 223.7 L320.21 234.5 L320.38 228.0 L320.54 248.1 L320.70 247.3 L320.86 241.5 L321.02 236.2 L321.18 242.9 L321.34 232.0 L321.51 245.8 L321.67 228.8 L321.83 232.3 L321.99 250.7 L322.15 235.6 L322.31 242.7 L322.47 231.7 L322.64 245.4 L322.80 237.9 L322.96 235.7 L323.12 264.5 L323.28 257.2 L323.44 239.4 L323.60 241.6 L323.77 231.4 L323.93 238.4 L324.09 251.6 L324.25 237.4 L324.41 247.0 L324.57 242.3 L324.73 244.8 L324.90 237.2 L325.06 252.9 L325.22 250.2 L325.38 260.0 L325.54 221.2 L325.70 249.1 L325.86 247.9 L326.03 250.5 L326.19 245.9 L326.35 244.1 L326.51 234.8 L326.67 238.7 L326.83 237.3 L326.99 245.5 L327.15 240.9 L327.32 229.5 L327.48 240.5 L327.64 237.6 L327.80 258.3 L327.96 235.7 L328.12 238.0 L328.28 228.9 L328.45 264.3 L328.61 240.1 L328.77 241.5 L328.93 239.7 L329.09 246.1 L329.25 238.6 L329.41 234.3 L329.58 240.2 L329.74 243.2 L329.90 242.5 L330.06 244.1 L330.22 240.3 L330.38 247.1 L330.54 258.4 L330.71 228.8 L330.87 256.4 L331.03 241.9 L331.19 252.5 L331.35 243.5 L331.51 249.5 L331.67 241.4 L331.84 248.5 L332.00 252.6 L332.16 238.4 L332.32 229.3 L332.48 238.1 L332.64 240.2 L332.80 250.6 L332.97 242.0 L333.13 237.4 L333.29 247.1 L333.45 233.4 L333.61 241.8 L333.77 238.3 L333.93 245.9 L334.10 245.9 L334.26 239.6 L334.42 238.2 L334.58 238.6 L334.74 250.7 L334.90 248.3 L335.06 242.0 L335.23 258.3 L335.39 232.6 L335.55 239.1 L335.71 241.6 L335.87 248.3 L336.03 234.7 L336.19 244.5 L336.36 225.2 L336.52 238.6 L336.68 255.4 L336.84 235.7 L337.00 246.9 L337.16 246.9 L337.32 244.4 L337.49 243.5 L337.65 240.1 L337.81 235.6 L337.97 238.4 L338.13 248.9 L338.29 254.5 L338.45 249.7 L338.62 239.3 L338.78 234.9 L338.94 226.6 L339.10 254.6 L339.26 241.9 L339.42 244.7 L339.58 246.3 L339.74 241.5 L339.91 244.9 L340.07 245.1 L340.23 248.5 L340.39 239.3 L340.55 233.5 L340.71 228.4 L340.87 247.5 L341.04 252.2 L341.20 245.2 L341.36 250.3 L341.52 233.8 L341.68 250.2 L341.84 242.3 L342.00 254.9 L342.17 246.1 L342.33 241.3 L342.49 229.4 L342.65 249.1 L342.81 239.7 L342.97 261.4 L343.13 253.7 L343.30 250.2 L343.46 247.4 L343.62 239.2 L343.78 237.4 L343.94 257.3 L344.10 238.3 L344.26 252.9 L344.43 226.8 L344.59 240.3 L344.75 241.7 L344.91 244.6 L345.07 243.3 L345.23 243.0 L345.39 249.2 L345.56 236.4 L345.72 240.6 L345.88 236.4 L346.04 243.6 L346.20 237.0 L346.36 249.7 L346.52 219.4 L346.69 249.3 L346.85 247.0 L347.01 234.5 L347.17 232.1 L347.33 250.1 L347.49 257.8 L347.65 255.4 L347.82 251.8 L347.98 250.0 L348.14 244.5 L348.30 233.9 L348.46 233.5 L348.62 248.4 L348.78 238.2 L348.95 235.2 L349.11 230.6 L349.27 244.4 L349.43 249.6 L349.59 236.4 L349.75 229.6 L349.91 247.7 L350.08 225.7 L350.24 227.8 L350.40 245.3 L350.56 256.9 L350.72 248.3 L350.88 246.1 L351.04 238.3 L351.20 257.8 L351.37 221.5 L351.53 222.3 L351.69 249.4 L351.85 259.5 L352.01 244.5 L352.17 239.2 L352.33 231.1 L352.50 236.7 L352.66 244.8 L352.82 260.4 L352.98 238.5 L353.14 235.5 L353.30 245.7 L353.46 240.5 L353.63 241.2 L353.79 245.1 L353.95 253.2 L354.11 239.9 L354.27 255.5 L354.43 230.5 L354.59 250.9 L354.76 238.6 L354.92 249.4 L355.08 239.6 L355.24 244.8 L355.40 238.2 L355.56 249.9 L355.72 257.4 L355.89 245.4 L356.05 246.0 L356.21 256.3 L356.37 249.0 L356.53 257.7 L356.69 241.9 L356.85 246.2 L357.02 242.8 L357.18 219.8 L357.34 241.5 L357.50 239.6 L357.66 237.3 L357.82 244.1 L357.98 248.1 L358.15 235.1 L358.31 233.7 L358.47 266.1 L358.63 244.3 L358.79 245.8 L358.95 247.8 L359.11 231.8 L359.28 247.6 L359.44 235.2 L359.60 247.6 L359.76 246.4 L359.92 236.3 L360.08 249.3 L360.24 244.2 L360.41 252.6 L360.57 250.6 L360.73 236.4 L360.89 237.6 L361.05 252.9 L361.21 253.2 L361.37 220.2 L361.54 248.4 L361.70 250.4 L361.86 238.2 L362.02 249.6 L362.18 245.9 L362.34 234.8 L362.50 233.8 L362.66 244.4 L362.83 230.8 L362.99 243.9 L363.15 244.8 L363.31 242.7 L363.47 245.3 L363.63 237.9 L363.79 240.1 L363.96 249.4 L364.12 241.0 L364.28 247.4 L364.44 247.7 L364.60 243.8 L364.76 233.5 L364.92 240.1 L365.09 231.3 L365.25 228.6 L365.41 242.8 L365.57 247.8 L365.73 249.4 L365.89 240.0 L366.05 234.8 L366.22 228.4 L366.38 254.0 L366.54 234.2 L366.70 232.9 L366.86 220.8 L367.02 240.7 L367.18 242.6 L367.35 255.8 L367.51 249.2 L367.67 252.0 L367.83 251.2 L367.99 250.2 L368.15 255.8 L368.31 243.0 L368.48 238.7 L368.64 235.4 L368.80 243.0 L368.96 232.7 L369.12 232.6 L369.28 255.5 L369.44 244.5 L369.61 253.1 L369.77 250.7 L369.93 240.3 L370.09 243.1 L370.25 229.0 L370.41 223.8 L370.57 238.1 L370.74 243.5 L370.90 243.1 L371.06 241.8 L371.22 236.5 L371.38 248.0 L371.54 236.3 L371.70 243.5 L371.87 231.9 L372.03 229.0 L372.19 225.6 L372.35 242.3 L372.51 252.7 L372.67 255.5 L372.83 243.1 L373.00 252.9 L373.16 254.8 L373.32 243.2 L373.48 248.6 L373.64 233.6 L373.80 222.4 L373.96 241.4 L374.12 236.5 L374.29 253.1 L374.45 237.3 L374.61 245.0 L374.77 248.3 L374.93 254.9 L375.09 224.1 L375.25 252.4 L375.42 248.7 L375.58 237.8 L375.74 235.1 L375.90 235.0 L376.06 236.4 L376.22 245.2 L376.38 87.1 L376.55 91.4 L376.71 103.8 L376.87 80.8 L377.03 95.4 L377.19 85.7 L377.35 103.8 L377.51 101.8 L377.68 97.2 L377.84 98.1 L378.00 85.2 L378.16 105.1 L378.32 91.6 L378.48 100.5 L378.64 88.9 L378.81 91.3 L378.97 97.0 L379.13 76.0 L379.29 93.2 L379.45 84.5 L379.61 102.8 L379.77 93.7 L379.94 92.1 L380.10 91.8 L380.26 95.4 L380.42 99.0 L380.58 112.9 L380.74 97.1 L380.90 99.7 L381.07 94.7 L381.23 86.3 L381.39 76.0 L381.55 88.8 L381.71 85.1 L381.87 88.0 L382.03 87.3 L382.20 88.3 L382.36 94.7 L382.52 95.2 L382.68 90.2 L382.84 79.1 L383.00 86.8 L383.16 80.5 L383.33 102.4 L383.49 90.7 L383.65 89.6 L383.81 88.7 L383.97 103.0 L384.13 106.6 L384.29 108.7 L384.46 95.6 L384.62 74.9 L384.78 91.0 L384.94 101.8 L385.10 90.1 L385.26 94.9 L385.42 91.3 L385.58 96.0 L385.75 102.4 L385.91 96.6 L386.07 87.2 L386.23 90.3 L386.39 83.3 L386.55 100.6 L386.71 84.6 L386.88 92.1 L387.04 91.1 L387.20 83.1 L387.36 93.5 L387.52 90.5 L387.68 87.6 L387.84 87.5 L388.01 86.3 L388.17 82.7 L388.33 88.4 L388.49 95.7 L388.65 73.9 L388.81 92.6 L388.97 89.5 L389.14 98.0 L389.30 108.8 L389.46 98.2 L389.62 91.8 L389.78 88.3 L389.94 92.1 L390.10 86.3 L390.27 84.8 L390.43 84.8 L390.59 92.2 L390.75 91.6 L390.91 93.9 L391.07 98.8 L391.23 81.5 L391.40 101.6 L391.56 92.8 L391.72 90.5 L391.88 108.4 L392.04 86.6 L392.20 94.9 L392.36 90.5 L392.53 94.7 L392.69 103.8 L392.85 90.8 L393.01 91.4 L393.17 84.7 L393.33 88.6 L393.49 104.9 L393.66 83.9 L393.82 86.2 L393.98 86.4 L394.14 88.6 L394.30 97.5 L394.46 88.2 L394.62 95.0 L394.79 72.9 L394.95 94.0 L395.11 100.6 L395.27 94.8 L395.43 81.4 L395.59 96.5 L395.75 110.7 L395.92 81.1 L396.08 89.7 L396.24 96.0 L396.40 86.8 L396.56 99.2 L396.72 101.1 L396.88 85.0 L397.04 96.1 L397.21 88.2 L397.37 92.1 L397.53 85.9 L397.69 91.4 L397.85 107.7 L398.01 87.1 L398.17 95.8 L398.34 85.6 L398.50 91.4 L398.66 81.5 L398.82 94.6 L398.98 107.7 L399.14 94.6 L399.30 88.3 L399.47 94.8 L399.63 95.8 L399.79 81.1 L399.95 93.4 L400.11 84.3 L400.27 91.1 L400.43 103.1 L400.60 99.3 L400.76 94.6 L400.92 89.9 L401.08 98.4 L401.24 102.9 L401.40 99.9 L401.56 96.2 L401.73 98.9 L401.89 96.6 L402.05 78.2 L402.21 90.1 L402.37 98.4 L402.53 92.3 L402.69 80.3 L402.86 87.4 L403.02 93.0 L403.18 102.5 L403.34 105.1 L403.50 94.8 L403.66 93.1 L403.82 104.5 L403.99 102.4 L404.15 92.6 L404.31 109.0 L404.47 105.3 L404.63 92.7 L404.79 88.0 L404.95 89.9 L405.12 84.7 L405.28 80.4 L405.44 85.5 L405.60 94.3 L405.76 76.2 L405.92 79.6 L406.08 85.2 L406.25 98.4 L406.41 89.2 L406.57 108.0 L406.73 94.7 L406.89 111.0 L407.05 95.4 L407.21 84.5 L407.38 92.1 L407.54 80.0 L407.70 92.2 L407.86 91.4 L408.02 94.5 L408.18 88.2 L408.34 92.4 L408.50 83.1 L408.67 80.0 L408.83 89.3 L408.99 100.6 L409.15 87.9 L409.31 81.9 L409.47 87.2 L409.63 89.9 L409.80 85.0 L409.96 82.2 L410.12 111.8 L410.28 80.6 L410.44 86.3 L410.60 88.5 L410.76 96.3 L410.93 90.4 L411.09 87.5 L411.25 103.3 L411.41 86.5 L411.57 91.6 L411.73 81.0 L411.89 87.0 L412.06 93.4 L412.22 91.7 L412.38 87.2 L412.54 91.0 L412.70 88.0 L412.86 97.5 L413.02 101.5 L413.19 96.4 L413.35 102.9 L413.51 98.0 L413.67 89.4 L413.83 104.4 L413.99 101.4 L414.15 86.5 L414.32 96.1 L414.48 92.2 L414.64 101.4 L414.80 100.0 L414.96 94.4 L415.12 79.8 L415.28 88.7 L415.45 104.7 L415.61 88.7 L415.77 85.1 L415.93 86.9 L416.09 101.3 L416.25 92.6 L416.41 76.1 L416.58 99.1 L416.74 89.6 L416.90 97.8 L417.06 101.7 L417.22 95.3 L417.38 84.3 L417.54 83.3 L417.71 98.7 L417.87 95.7 L418.03 98.8 L418.19 107.8 L418.35 87.5 L418.51 80.3 L418.67 80.8 L418.84 95.6 L419.00 82.1 L419.16 83.8 L419.32 94.6 L419.48 92.1 L419.64 94.8 L419.80 90.2 L419.96 78.4 L420.13 99.0 L420.29 101.0 L420.45 85.4 L420.61 91.6 L420.77 106.3 L420.93 99.7 L421.09 98.3 L421.26 96.6 L421.42 89.6 L421.58 84.5 L421.74 93.2 L421.90 90.9 L422.06 97.6 L422.22 84.3 L422.39 81.8 L422.55 94.0 L422.71 97.6 L422.87 76.3 L423.03 85.0 L423.19 98.7 L423.35 104.7 L423.52 94.2 L423.68 82.9 L423.84 96.1 L424.00 93.8 L424.16 95.7 L424.32 87.0 L424.48 81.4 L424.65 101.4 L424.81 94.1 L424.97 93.4 L425.13 96.6 L425.29 100.9 L425.45 85.7 L425.61 90.7 L425.78 86.5 L425.94 80.5 L426.10 94.7 L426.26 87.8 L426.42 94.9 L426.58 92.6 L426.74 89.4 L426.91 93.1 L427.07 103.3 L427.23 80.5 L427.39 90.7 L427.55 100.5 L427.71 108.6 L427.87 92.1 L428.04 86.9 L428.20 84.3 L428.36 83.4 L428.52 94.8 L428.68 87.0 L428.84 103.5 L429.00 90.7 L429.17 85.0 L429.33 96.5 L429.49 93.1 L429.65 91.1 L429.81 90.8 L429.97 80.6 L430.13 100.0 L430.30 81.8 L430.46 101.3 L430.62 96.9 L430.78 97.7 L430.94 92.5 L431.10 95.6 L431.26 88.2 L431.42 91.8 L431.59 75.2 L431.75 89.0 L431.91 93.8 L432.07 89.0 L432.23 87.4 L432.39 93.3 L432.55 100.3 L432.72 98.0 L432.88 90.5 L433.04 85.6 L433.20 88.2 L433.36 92.5 L433.52 87.6 L433.68 95.6 L433.85 89.9 L434.01 81.1 L434.17 83.4 L434.33 81.6 L434.49 94.7 L434.65 90.3 L434.81 99.5 L434.98 84.9 L435.14 95.1 L435.30 101.8 L435.46 95.6 L435.62 90.0 L435.78 108.6 L435.94 102.6 L436.11 84.4 L436.27 91.2 L436.43 92.2 L436.59 104.0 L436.75 79.9 L436.91 84.1 L437.07 86.6 L437.24 100.3 L437.40 87.5 L437.56 83.3 L437.72 94.4 L437.88 93.8 L438.04 95.5 L438.20 87.4 L438.37 93.7 L438.53 94.3 L438.69 102.9 L438.85 104.5 L439.01 84.8 L439.17 80.0 L439.33 85.4 L439.50 81.2 L439.66 96.0 L439.82 92.3 L439.98 89.1 L440.14 93.2 L440.30 79.3 L440.46 101.9 L440.63 96.3 L440.79 94.6 L440.95 97.3 L441.11 85.6 L441.27 107.0 L441.43 83.4 L441.59 85.1 L441.76 89.6 L441.92 81.4 L442.08 74.2 L442.24 90.5 L442.40 86.4 L442.56 89.0 L442.72 88.0 L442.88 95.7 L443.05 97.3 L443.21 87.3 L443.37 95.8 L443.53 84.8 L443.69 85.8 L443.85 95.2 L444.01 89.1 L444.18 91.2 L444.34 92.9 L444.50 83.3 L444.66 91.5 L444.82 90.0 L444.98 106.4 L445.14 87.3 L445.31 102.6 L445.47 94.7 L445.63 79.7 L445.79 78.3 L445.95 94.7 L446.11 101.3 L446.27 88.8 L446.44 94.8 L446.60 89.2 L446.76 101.9 L446.92 83.3 L447.08 80.1 L447.24 102.7 L447.40 97.6 L447.57 97.0 L447.73 86.2 L447.89 106.6 L448.05 90.2 L448.21 93.5 L448.37 97.7 L448.53 86.4 L448.70 106.4 L448.86 102.1 L449.02 97.6 L449.18 86.4 L449.34 94.4 L449.50 98.0 L449.66 88.1 L449.83 95.4 L449.99 96.6 L450.15 94.0 L450.31 89.2 L450.47 72.9 L450.63 99.9 L450.79 89.6 L450.96 92.9 L451.12 93.6 L451.28 80.2 L451.44 85.8 L451.60 86.6 L451.76 95.0 L451.92 98.0 L452.09 89.4 L452.25 93.8 L452.41 95.9 L452.57 86.5 L452.73 100.7 L452.89 97.1 L453.05 85.6 L453.22 92.2 L453.38 86.5 L453.54 98.0 L453.70 86.2 L453.86 96.9 L454.02 81.3 L454.18 85.6 L454.34 88.0 L454.51 79.9 L454.67 88.9 L454.83 96.3 L454.99 79.8 L455.15 88.9 L455.31 82.3 L455.47 90.3 L455.64 82.7 L455.80 98.0 L455.96 101.0 L456.12 102.0 L456.28 85.7 L456.44 106.2 L456.60 104.9 L456.77 102.1 L456.93 89.7 L457.09 88.1 L457.25 97.5 L457.41 85.5 L457.57 89.0 L457.73 82.3 L457.90 84.3 L458.06 96.6 L458.22 89.9 L458.38 92.6 L458.54 87.9 L458.70 89.8 L458.86 91.2 L459.03 86.0 L459.19 90.9 L459.35 85.8 L459.51 91.1 L459.67 92.5 L459.83 84.4 L459.99 84.1 L460.16 82.0 L460.32 86.6 L460.48 92.9 L460.64 89.9 L460.80 90.1 L460.96 104.5 L461.12 99.8 L461.29 79.8 L461.45 91.8 L461.61 112.8 L461.77 92.2 L461.93 90.1 L462.09 100.6 L462.25 74.2 L462.42 82.8 L462.58 227.4 L462.74 236.5 L462.90 230.9 L463.06 228.1 L463.22 231.8 L463.38 242.4 L463.55 235.3 L463.71 236.3 L463.87 235.4 L464.03 247.6 L464.19 236.6 L464.35 239.3 L464.51 237.6 L464.68 238.2 L464.84 252.9 L465.00 232.8 L465.16 233.8 L465.32 252.3 L465.48 241.3 L465.64 248.0 L465.80 244.5 L465.97 231.6 L466.13 235.8 L466.29 223.0 L466.45 239.7 L466.61 250.4 L466.77 239.5 L466.93 262.2 L467.10 224.8 L467.26 238.3 L467.42 236.7 L467.58 239.3 L467.74 248.2 L467.90 241.8 L468.06 247.7 L468.23 245.3 L468.39 237.9 L468.55 251.5 L468.71 226.3 L468.87 250.3 L469.03 233.6 L469.19 246.6 L469.36 251.9 L469.52 237.6 L469.68 239.6 L469.84 243.1 L470.00 241.6 L470.16 246.6 L470.32 237.4 L470.49 245.4 L470.65 241.0 L470.81 231.4 L470.97 252.9 L471.13 246.3 L471.29 247.3 L471.45 248.4 L471.62 253.2 L471.78 243.8 L471.94 240.0 L472.10 242.4 L472.26 255.5 L472.42 235.4 L472.58 235.2 L472.75 240.8 L472.91 250.3 L473.07 249.0 L473.23 224.3 L473.39 226.3 L473.55 237.3 L473.71 249.5 L473.88 230.4 L474.04 239.9 L474.20 226.7 L474.36 246.5 L474.52 237.3 L474.68 243.3 L474.84 234.8 L475.01 247.1 L475.17 233.4 L475.33 244.9 L475.49 249.3 L475.65 236.4 L475.81 239.4 L475.97 260.1 L476.14 241.8 L476.30 240.5 L476.46 239.8 L476.62 223.4 L476.78 247.1 L476.94 241.6 L477.10 256.4 L477.26 254.2 L477.43 246.4 L477.59 242.6 L477.75 243.1 L477.91 235.8 L478.07 234.9 L478.23 232.5 L478.39 242.8 L478.56 237.0 L478.72 247.7 L478.88 238.2 L479.04 237.1 L479.20 245.8 L479.36 265.3 L479.52 247.1 L479.69 218.6 L479.85 242.2 L480.01 247.0 L480.17 240.4 L480.33 231.5 L480.49 238.4 L480.65 243.1 L480.82 252.6 L480.98 243.9 L481.14 251.8 L481.30 238.2 L481.46 227.9 L481.62 231.9 L481.78 246.5 L481.95 250.0 L482.11 253.6 L482.27 237.3 L482.43 236.2 L482.59 234.3 L482.75 238.2 L482.91 251.9 L483.08 258.2 L483.24 231.4 L483.40 248.7 L483.56 224.5 L483.72 259.9 L483.88 251.0 L484.04 249.5 L484.21 238.9 L484.37 235.4 L484.53 246.1 L484.69 236.0 L484.85 252.8 L485.01 245.7 L485.17 252.0 L485.34 246.2 L485.50 246.9 L485.66 238.6 L485.82 218.0 L485.98 253.4 L486.14 243.1 L486.30 235.2 L486.47 240.6 L486.63 228.7 L486.79 250.3 L486.95 234.4 L487.11 248.2 L487.27 234.0 L487.43 239.8 L487.60 239.0 L487.76 246.4 L487.92 257.6 L488.08 251.0 L488.24 234.9 L488.40 243.5 L488.56 234.7 L488.72 252.9 L488.89 235.5 L489.05 232.3 L489.21 260.8 L489.37 238.3 L489.53 224.0 L489.69 247.9 L489.85 232.3 L490.02 240.8 L490.18 233.6 L490.34 244.6 L490.50 248.0 L490.66 244.9 L490.82 244.3 L490.98 246.3 L491.15 248.9 L491.31 231.3 L491.47 246.3 L491.63 251.8 L491.79 249.4 L491.95 236.8 L492.11 260.8 L492.28 236.7 L492.44 234.8 L492.60 229.8 L492.76 245.0 L492.92 248.4 L493.08 239.5 L493.24 239.8 L493.41 229.4 L493.57 240.6 L493.73 244.8 L493.89 252.9 L494.05 242.9 L494.21 240.4 L494.37 230.6 L494.54 240.1 L494.70 229.1 L494.86 230.1 L495.02 247.8 L495.18 251.1 L495.34 246.7 L495.50 243.1 L495.67 248.2 L495.83 234.8 L495.99 235.1 L496.15 230.3 L496.31 238.6 L496.47 244.9 L496.63 237.4 L496.80 249.1 L496.96 239.7 L497.12 247.8 L497.28 230.8 L497.44 264.6 L497.60 233.5 L497.76 233.2 L497.93 241.4 L498.09 238.1 L498.25 239.2 L498.41 229.6 L498.57 226.4 L498.73 241.0 L498.89 226.6 L499.06 246.8 L499.22 237.4 L499.38 237.2 L499.54 252.3 L499.70 238.2 L499.86 247.0 L500.02 234.1 L500.18 249.0 L500.35 256.8 L500.51 252.7 L500.67 240.9 L500.83 238.4 L500.99 238.1 L501.15 247.9 L501.31 234.2 L501.48 246.0 L501.64 243.1 L501.80 232.5 L501.96 242.6 L502.12 257.9 L502.28 234.9 L502.44 241.2 L502.61 244.7 L502.77 229.8 L502.93 246.8 L503.09 235.5 L503.25 240.1 L503.41 218.3 L503.57 257.2 L503.74 239.6 L503.90 238.2 L504.06 231.6 L504.22 245.1 L504.38 247.0 L504.54 229.0 L504.70 245.1 L504.87 238.9 L505.03 241.8 L505.19 238.0 L505.35 253.3 L505.51 246.2 L505.67 241.9 L505.83 240.5 L506.00 231.7 L506.16 236.9 L506.32 236.4 L506.48 242.0 L506.64 230.3 L506.80 246.9 L506.96 242.4 L507.13 254.7 L507.29 250.8 L507.45 234.0 L507.61 242.0 L507.77 258.0 L507.93 242.0 L508.09 243.7 L508.26 251.7 L508.42 238.7 L508.58 244.0 L508.74 241.6 L508.90 233.3 L509.06 247.1 L509.22 232.2 L509.39 244.1 L509.55 244.0 L509.71 230.3 L509.87 238.4 L510.03 245.4 L510.19 242.8 L510.35 239.9 L510.52 254.7 L510.68 235.9 L510.84 241.9 L511.00 253.3 L511.16 250.2 L511.32 234.2 L511.48 253.1 L511.65 222.9 L511.81 251.4 L511.97 240.1 L512.13 264.6 L512.29 242.6 L512.45 246.6 L512.61 237.8 L512.77 240.4 L512.94 245.1 L513.10 223.1 L513.26 235.3 L513.42 248.7 L513.58 239.1 L513.74 265.9 L513.90 247.4 L514.07 231.3 L514.23 247.2 L514.39 241.1 L514.55 252.6 L514.71 235.4 L514.87 241.4 L515.03 242.5 L515.20 234.2 L515.36 228.0 L515.52 235.5 L515.68 257.9 L515.84 239.1 L516.00 240.3 L516.16 252.8 L516.33 257.0 L516.49 246.3 L516.65 245.4 L516.81 243.4 L516.97 249.3 L517.13 241.4 L517.29 240.2 L517.46 245.4 L517.62 239.5 L517.78 248.1 L517.94 256.9 L518.10 243.0 L518.26 235.2 L518.42 219.4 L518.59 261.9 L518.75 247.5 L518.91 250.8 L519.07 240.7 L519.23 250.9 L519.39 242.0 L519.55 234.4 L519.72 249.8 L519.88 243.8 L520.04 228.9 L520.20 235.4 L520.36 257.6 L520.52 224.9 L520.68 249.3 L520.85 240.6 L521.01 247.0 L521.17 247.4 L521.33 249.5 L521.49 237.9 L521.65 250.3 L521.81 254.7 L521.98 248.6 L522.14 243.6 L522.30 261.4 L522.46 236.6 L522.62 250.0 L522.78 237.3 L522.94 231.5 L523.11 241.0 L523.27 239.1 L523.43 247.9 L523.59 249.9 L523.75 260.8 L523.91 245.7 L524.07 248.9 L524.23 265.1 L524.40 241.8 L524.56 230.8 L524.72 240.7 L524.88 234.0 L525.04 246.8 L525.20 253.5 L525.36 243.9 L525.53 247.6 L525.69 254.7 L525.85 235.5 L526.01 243.2 L526.17 250.6 L526.33 243.1 L526.49 246.2 L526.66 239.5 L526.82 230.9 L526.98 250.6 L527.14 255.7 L527.30 233.0 L527.46 224.0 L527.62 250.7 L527.79 253.5 L527.95 256.1 L528.11 245.6 L528.27 244.6 L528.43 247.9 L528.59 238.3 L528.75 253.0 L528.92 251.1 L529.08 257.0 L529.24 233.7 L529.40 236.5 L529.56 234.5 L529.72 253.6 L529.88 234.4 L530.05 243.7 L530.21 240.0 L530.37 241.2 L530.53 249.3 L530.69 248.0 L530.85 260.2 L531.01 251.5 L531.18 248.7 L531.34 257.0 L531.50 246.0 L531.66 235.6 L531.82 251.3 L531.98 255.6 L532.14 254.6 L532.31 245.5 L532.47 231.8 L532.63 245.8 L532.79 246.9 L532.95 258.4 L533.11 244.6 L533.27 242.0 L533.44 251.2 L533.60 247.9 L533.76 253.6 L533.92 241.3 L534.08 236.1 L534.24 244.6 L534.40 243.6 L534.57 247.6 L534.73 253.9 L534.89 255.1 L535.05 251.9 L535.21 247.4 L535.37 248.5 L535.53 239.6 L535.69 242.0 L535.86 235.5 L536.02 241.8 L536.18 250.9 L536.34 248.0 L536.50 263.2 L536.66 234.2 L536.82 254.1 L536.99 252.7 L537.15 233.0 L537.31 258.7 L537.47 254.7 L537.63 249.9 L537.79 254.5 L537.95 248.6 L538.12 247.3 L538.28 243.9 L538.44 250.5 L538.60 243.5 L538.76 252.6 L538.92 244.3 L539.08 239.4 L539.25 265.1 L539.41 251.9 L539.57 248.3 L539.73 266.6 L539.89 273.9 L540.05 247.3 L540.21 255.8 L540.38 243.2 L540.54 250.3 L540.70 250.4 L540.86 253.4 L541.02 249.5 L541.18 258.4 L541.34 255.0 L541.51 243.6 L541.67 252.8 L541.83 246.2 L541.99 250.8 L542.15 253.7 L542.31 259.3 L542.47 243.4 L542.64 258.2 L542.80 247.6 L542.96 264.7 L543.12 248.7 L543.28 247.7 L543.44 256.8 L543.60 265.5 L543.77 252.7 L543.93 250.4 L544.09 256.0 L544.25 257.4 L544.41 243.5 L544.57 252.6 L544.73 255.3 L544.90 244.2 L545.06 251.9 L545.22 257.9 L545.38 244.2 L545.54 255.1 L545.70 243.8 L545.86 257.9 L546.03 249.2 L546.19 241.3 L546.35 248.2 L546.51 247.8 L546.67 248.3 L546.83 244.8 L546.99 251.7 L547.15 248.5 L547.32 254.5 L547.48 235.6 L547.64 260.3 L547.80 245.4 L547.96 261.3 L548.12 248.0 L548.28 241.3 L548.45 262.5 L548.61 237.5 L548.77 261.4 L548.93 260.2 L549.09 250.3 L549.25 262.8 L549.41 244.6 L549.58 248.9 L549.74 277.1 L549.90 265.8 L550.06 259.7 L550.22 249.8 L550.38 262.9 L550.54 259.9 L550.71 248.2 L550.87 262.4 L551.03 251.1 L551.19 265.7 L551.35 245.0 L551.51 241.4 L551.67 263.9 L551.84 274.6 L552.00 268.7 L552.16 245.6 L552.32 259.1 L552.48 244.9 L552.64 265.9 L552.80 262.4 L552.97 255.3 L553.13 245.0 L553.29 256.2 L553.45 263.4 L553.61 251.8 L553.77 253.7 L553.93 250.1 L554.10 256.1 L554.26 260.0 L554.42 254.4 L554.58 276.2 L554.74 252.3 L554.90 243.9 L555.06 249.8 L555.23 263.0 L555.39 268.1 L555.55 243.2 L555.71 259.2 L555.87 256.6 L556.03 252.8 L556.19 259.9 L556.36 254.4 L556.52 241.7 L556.68 259.1 L556.84 238.0 L557.00 251.4 L557.16 252.0 L557.32 246.5 L557.49 246.7 L557.65 245.6 L557.81 249.9 L557.97 259.9 L558.13 240.5 L558.29 256.1 L558.45 262.0 L558.61 246.9 L558.78 249.0 L558.94 255.0 L559.10 254.0 L559.26 249.6 L559.42 237.8 L559.58 255.3 L559.74 265.7 L559.91 259.6 L560.07 250.1 L560.23 256.3 L560.39 260.4 L560.55 248.2 L560.71 248.1 L560.87 256.3 L561.04 252.0 L561.20 260.0 L561.36 259.8 L561.52 257.4 L561.68 266.3 L561.84 251.4 L562.00 255.0 L562.17 258.8 L562.33 253.4 L562.49 253.1 L562.65 260.8 L562.81 259.4 L562.97 261.2 L563.13 242.4 L563.30 268.9 L563.46 254.9 L563.62 246.9 L563.78 263.6 L563.94 262.5 L564.10 262.7 L564.26 269.9 L564.43 243.9 L564.59 256.4 L564.75 264.0 L564.91 259.9 L565.07 252.9 L565.23 257.3 L565.39 262.2 L565.56 250.0 L565.72 262.1 L565.88 257.8 L566.04 252.8 L566.20 260.6 L566.36 253.6 L566.52 259.8 L566.69 230.8 L566.85 257.7 L567.01 248.1 L567.17 261.6 L567.33 263.8 L567.49 255.1 L567.65 257.0 L567.82 256.9 L567.98 254.2 L568.14 246.1 L568.30 237.0 L568.46 236.1 L568.62 253.2 L568.78 237.6 L568.95 238.7 L569.11 259.1 L569.27 257.8 L569.43 254.4 L569.59 236.3 L569.75 254.7 L569.91 255.6 L570.07 241.3 L570.24 255.0 L570.40 254.7 L570.56 248.1 L570.72 251.7 L570.88 274.4 L571.04 264.1 L571.20 246.9 L571.37 265.7 L571.53 242.3 L571.69 253.6 L571.85 250.7 L572.01 250.4 L572.17 268.5 L572.33 259.0 L572.50 261.9 L572.66 250.5 L572.82 239.2 L572.98 254.5 L573.14 251.8 L573.30 269.5 L573.46 255.6 L573.63 254.3 L573.79 253.8 L573.95 246.8 L574.11 239.7 L574.27 252.1 L574.43 248.4 L574.59 265.5 L574.76 246.4 L574.92 251.4 L575.08 266.9 L575.24 248.6 L575.40 257.2 L575.56 242.5 L575.72 247.3 L575.89 250.5 L576.05 236.1 L576.21 252.5 L576.37 253.8 L576.53 250.7 L576.69 249.9 L576.85 258.3 L577.02 245.7 L577.18 246.9 L577.34 255.2 L577.50 264.2 L577.66 239.8 L577.82 238.7 L577.98 242.2 L578.15 241.3 L578.31 234.1 L578.47 246.8 L578.63 235.2 L578.79 250.7 L578.95 256.9 L579.11 249.0 L579.28 251.8 L579.44 244.6 L579.60 232.9 L579.76 245.1 L579.92 239.4 L580.08 229.8 L580.24 232.7 L580.41 247.6 L580.57 254.2 L580.73 229.5 L580.89 257.6 L581.05 264.1 L581.21 265.6 L581.37 237.6 L581.53 260.8 L581.70 250.1 L581.86 248.9 L582.02 236.2 L582.18 259.7 L582.34 247.1 L582.50 244.8 L582.66 235.0 L582.83 249.5 L582.99 244.9 L583.15 249.7 L583.31 237.5 L583.47 238.7 L583.63 250.4 L583.79 242.1 L583.96 259.9 L584.12 246.2 L584.28 254.5 L584.44 250.3 L584.60 237.6 L584.76 227.5 L584.92 244.5 L585.09 247.5 L585.25 249.2 L585.41 239.5 L585.57 247.7 L585.73 237.3 L585.89 232.3 L586.05 240.3 L586.22 249.2 L586.38 239.0 L586.54 251.7 L586.70 261.1 L586.86 235.4 L587.02 228.5 L587.18 233.6 L587.35 248.5 L587.51 268.8 L587.67 251.7 L587.83 239.6 L587.99 248.6 L588.15 232.7 L588.31 252.1 L588.48 240.5 L588.64 242.8 L588.80 242.5 L588.96 257.2 L589.12 245.6 L589.28 242.3 L589.44 248.1 L589.61 256.1 L589.77 248.7 L589.93 252.8 L590.09 241.2 L590.25 235.7 L590.41 241.3 L590.57 240.8 L590.74 245.6 L590.90 242.3 L591.06 261.2 L591.22 243.2 L591.38 235.9 L591.54 248.4 L591.70 237.5 L591.87 257.0 L592.03 243.1 L592.19 245.1 L592.35 239.3 L592.51 242.0 L592.67 223.5 L592.83 266.5 L592.99 256.0 L593.16 249.1 L593.32 242.2 L593.48 248.7 L593.64 248.9 L593.80 256.8 L593.96 254.8 L594.12 250.4 L594.29 229.1 L594.45 249.7 L594.61 218.7 L594.77 232.9 L594.93 244.8 L595.09 234.9 L595.25 233.0 L595.42 252.7 L595.58 256.4 L595.74 228.8 L595.90 250.4 L596.06 234.0 L596.22 235.6 L596.38 256.5 L596.55 235.7 L596.71 236.4 L596.87 229.9 L597.03 241.6 L597.19 237.1 L597.35 237.7 L597.51 243.1 L597.68 226.4 L597.84 232.3 L598.00 227.1 L598.16 237.6 L598.32 230.3 L598.48 249.1 L598.64 246.0 L598.81 231.5 L598.97 242.4 L599.13 243.8 L599.29 238.8 L599.45 254.2 L599.61 238.6 L599.77 235.6 L599.94 242.8 L600.10 249.8 L600.26 224.1 L600.42 235.9 L600.58 248.7 L600.74 244.8 L600.90 253.8 L601.07 254.9 L601.23 256.3 L601.39 246.6 L601.55 235.4 L601.71 232.5 L601.87 240.0 L602.03 229.8 L602.20 233.8 L602.36 249.0 L602.52 246.2 L602.68 236.0 L602.84 232.4 L603.00 228.8 L603.16 250.6 L603.33 255.6 L603.49 220.2 L603.65 240.6 L603.81 229.1 L603.97 237.6 L604.13 250.1 L604.29 225.2 L604.45 233.4 L604.62 224.3 L604.78 232.0 L604.94 246.1 L605.10 237.6 L605.26 228.2 L605.42 243.2 L605.58 235.3 L605.75 226.5 L605.91 247.8 L606.07 240.0 L606.23 235.0 L606.39 228.0 L606.55 237.2 L606.71 242.7 L606.88 231.2 L607.04 241.6 L607.20 232.3 L607.36 232.7 L607.52 237.6 L607.68 228.1 L607.84 225.1 L608.01 247.2 L608.17 230.8 L608.33 236.8 L608.49 237.9 L608.65 234.4 L608.81 224.6 L608.97 236.3 L609.14 237.7 L609.30 245.9 L609.46 236.2 L609.62 234.6 L609.78 242.9 L609.94 237.1 L610.10 230.0 L610.27 221.8 L610.43 236.6 L610.59 216.2 L610.75 224.9 L610.91 226.0 L611.07 228.3 L611.23 232.5 L611.40 238.9 L611.56 233.8 L611.72 232.5 L611.88 231.5 L612.04 219.2 L612.20 215.0 L612.36 227.8 L612.53 223.6 L612.69 238.5 L612.85 249.8 L613.01 233.0 L613.17 229.8 L613.33 219.5 L613.49 210.3 L613.66 229.3 L613.82 220.0 L613.98 221.6 L614.14 229.4 L614.30 223.9 L614.46 227.7 L614.62 217.2 L614.79 240.3 L614.95 251.3 L615.11 229.5 L615.27 222.4 L615.43 221.1 L615.59 235.4 L615.75 225.4 L615.91 236.0 L616.08 224.0 L616.24 236.6 L616.40 239.4 L616.56 221.4 L616.72 240.8 L616.88 242.6 L617.04 222.4 L617.21 228.5 L617.37 249.8 L617.53 218.7 L617.69 240.0 L617.85 233.0 L618.01 229.9 L618.17 210.9 L618.34 228.9 L618.50 220.6 L618.66 229.7 L618.82 223.9 L618.98 240.8 L619.14 228.2 L619.30 233.5 L619.47 237.0 L619.63 225.3 L619.79 218.6 L619.95 223.5 L620.11 230.4 L620.27 221.0 L620.43 237.3 L620.60 224.5 L620.76 222.7 L620.92 228.0 L621.08 229.3 L621.24 225.9 L621.40 231.9 L621.56 228.8 L621.73 220.2 L621.89 243.7 L622.05 215.5 L622.21 222.4 L622.37 224.5 L622.53 235.2 L622.69 229.8 L622.86 231.4 L623.02 220.0 L623.18 220.4 L623.34 215.7 L623.50 225.3 L623.66 243.6 L623.82 234.2 L623.99 228.9 L624.15 222.6 L624.31 238.7 L624.47 227.2 L624.63 224.8 L624.79 230.5 L624.95 226.9 L625.12 205.0 L625.28 225.2 L625.44 207.5 L625.60 222.8 L625.76 231.1 L625.92 219.9 L626.08 228.3 L626.25 225.2 L626.41 244.4 L626.57 221.4 L626.73 229.6 L626.89 214.4 L627.05 223.3 L627.21 227.6 L627.37 233.4 L627.54 223.9 L627.70 227.3 L627.86 230.8 L628.02 207.4 L628.18 225.1 L628.34 215.9 L628.50 210.7 L628.67 220.0 L628.83 218.0 L628.99 219.0 L629.15 214.9 L629.31 218.2 L629.47 218.8 L629.63 221.9 L629.80 227.3 L629.96 226.8 L630.12 228.5 L630.28 221.1 L630.44 211.2 L630.60 231.0 L630.76 227.9 L630.93 231.1 L631.09 222.9 L631.25 213.3 L631.41 225.2 L631.57 219.5 L631.73 242.5 L631.89 223.3 L632.06 217.7 L632.22 227.3 L632.38 236.1 L632.54 217.7 L632.70 222.6 L632.86 205.6 L633.02 226.5 L633.19 222.7 L633.35 224.6 L633.51 220.3 L633.67 237.1 L633.83 209.1 L633.99 215.4 L634.15 222.9 L634.32 223.9 L634.48 216.1 L634.64 217.5 L634.80 224.2 L634.96 221.9 L635.12 217.3 L635.28 224.0 L635.45 223.1 L635.61 223.8 L635.77 223.2 L635.93 231.3 L636.09 228.1 L636.25 216.6 L636.41 212.8 L636.58 220.1 L636.74 243.5 L636.90 232.4 L637.06 215.8 L637.22 204.5 L637.38 208.6 L637.54 220.9 L637.71 222.1 L637.87 222.7 L638.03 203.7 L638.19 216.7 L638.35 226.8 L638.51 210.3 L638.67 211.3 L638.83 236.1 L639.00 223.9 L639.16 209.5 L639.32 210.3 L639.48 229.0 L639.64 218.1 L639.80 210.3 L639.96 214.9 L640.13 227.0 L640.29 219.4 L640.45 211.9 L640.61 213.3 L640.77 225.9 L640.93 196.9 L641.09 215.4 L641.26 230.4 L641.42 220.1 L641.58 241.0 L641.74 223.0 L641.90 217.3 L642.06 195.8 L642.22 215.1 L642.39 213.5 L642.55 210.0 L642.71 214.7 L642.87 221.7 L643.03 204.6 L643.19 211.8 L643.35 202.8 L643.52 207.2 L643.68 224.3 L643.84 220.0 L644.00 219.5 L644.16 219.3 L644.32 211.9 L644.48 217.3 L644.65 222.6 L644.81 202.8 L644.97 203.7 L645.13 215.1 L645.29 224.6 L645.45 220.7 L645.61 221.8 L645.78 223.0 L645.94 223.6 L646.10 213.0 L646.26 212.5 L646.42 211.2 L646.58 223.0 L646.74 212.3 L646.91 197.5 L647.07 212.7 L647.23 218.1 L647.39 192.0 L647.55 211.9 L647.71 220.0 L647.87 206.8 L648.04 220.6 L648.20 217.5 L648.36 205.6 L648.52 219.6 L648.68 227.1 L648.84 208.1 L649.00 206.9 L649.17 226.1 L649.33 217.1 L649.49 204.6 L649.65 211.8 L649.81 206.7 L649.97 214.9 L650.13 219.3 L650.29 218.6 L650.46 216.4 L650.62 212.1 L650.78 237.0 L650.94 230.2 L651.10 213.5 L651.26 207.7 L651.42 219.2 L651.59 213.3 L651.75 222.7 L651.91 225.3 L652.07 211.9 L652.23 213.8 L652.39 217.6 L652.55 224.5 L652.72 212.5 L652.88 213.7 L653.04 215.3 L653.20 214.1 L653.36 216.2 L653.52 208.5 L653.68 209.6 L653.85 197.6 L654.01 200.8 L654.17 213.3 L654.33 223.6 L654.49 207.5 L654.65 218.1 L654.81 199.7 L654.98 225.7 L655.14 216.6 L655.30 199.6 L655.46 212.8 L655.62 206.5 L655.78 207.1 L655.94 216.9 L656.11 205.5 L656.27 220.2 L656.43 215.5 L656.59 194.4 L656.75 214.2 L656.91 209.4 L657.07 221.8 L657.24 201.0 L657.40 220.4 L657.56 218.9 L657.72 217.6 L657.88 220.6 L658.04 224.7 L658.20 214.9 L658.37 216.6 L658.53 213.2 L658.69 220.8 L658.85 220.1 L659.01 215.1 L659.17 212.3 L659.33 220.2 L659.50 212.6 L659.66 214.2 L659.82 203.1 L659.98 206.7 L660.14 207.8 L660.30 203.4 L660.46 217.5 L660.63 200.4 L660.79 210.4 L660.95 216.2 L661.11 208.5 L661.27 221.2 L661.43 196.6 L661.59 209.7 L661.75 224.7 L661.92 221.5 L662.08 216.2 L662.24 216.6 L662.40 207.9 L662.56 204.1 L662.72 202.9 L662.88 207.0 L663.05 219.7 L663.21 202.0 L663.37 201.0 L663.53 228.2 L663.69 216.4 L663.85 214.6 L664.01 218.2 L664.18 202.5 L664.34 207.5 L664.50 210.9 L664.66 221.9 L664.82 229.1 L664.98 219.4 L665.14 218.5 L665.31 219.1 L665.47 229.6 L665.63 224.5 L665.79 215.0 L665.95 208.4 L666.11 215.9 L666.27 213.3 L666.44 211.9 L666.60 211.8 L666.76 200.9 L666.92 218.1 L667.08 209.4 L667.24 222.5 L667.40 201.0 L667.57 204.8 L667.73 202.6 L667.89 210.1 L668.05 212.1 L668.21 222.0 L668.37 208.3 L668.53 199.2 L668.70 234.8 L668.86 195.8 L669.02 217.9 L669.18 206.7 L669.34 217.9 L669.50 212.1 L669.66 203.7 L669.83 212.3 L669.99 195.1 L670.15 210.4 L670.31 205.1 L670.47 216.0 L670.63 215.0 L670.79 214.0 L670.96 206.3 L671.12 196.2 L671.28 210.3 L671.44 221.6 L671.60 215.8 L671.76 222.3 L671.92 206.3 L672.09 210.2 L672.25 219.7 L672.41 213.5 L672.57 202.3 L672.73 206.4 L672.89 215.3 L673.05 203.8 L673.21 206.9 L673.38 215.0 L673.54 208.7 L673.70 194.1 L673.86 219.8 L674.02 201.4 L674.18 211.4 L674.34 204.7 L674.51 206.7 L674.67 207.7 L674.83 211.5 L674.99 210.1 L675.15 204.3 L675.31 206.1 L675.47 222.7 L675.64 206.1 L675.80 198.7 L675.96 202.3 L676.12 208.2 L676.28 225.8 L676.44 204.9 L676.60 204.2 L676.77 197.3 L676.93 218.2 L677.09 212.0 L677.25 214.5 L677.41 212.3 L677.57 224.8 L677.73 214.0 L677.90 213.6 L678.06 213.2 L678.22 196.1 L678.38 215.4 L678.54 213.8 L678.70 200.2 L678.86 214.8 L679.03 199.5 L679.19 206.0 L679.35 215.3 L679.51 216.0 L679.67 208.7 L679.83 211.6 L679.99 209.0 L680.16 214.9 L680.32 204.8 L680.48 215.7 L680.64 213.9 L680.80 211.4 L680.96 220.8 L681.12 212.6 L681.29 211.6 L681.45 222.4 L681.61 225.4 L681.77 199.1 L681.93 212.2 L682.09 211.1 L682.25 215.3 L682.42 196.2 L682.58 211.6 L682.74 225.3 L682.90 205.6 L683.06 218.3 L683.22 206.1 L683.38 211.0 L683.55 198.8 L683.71 205.7 L683.87 213.1 L684.03 197.4 L684.19 186.6 L684.35 214.4 L684.51 200.3 L684.68 206.5 L684.84 205.8 L685.00 220.5 L685.16 218.2 L685.32 197.4 L685.48 208.4 L685.64 214.3 L685.80 194.0 L685.97 199.0 L686.13 203.3 L686.29 218.2 L686.45 209.8 L686.61 196.8 L686.77 227.4 L686.93 223.5 L687.10 216.6 L687.26 201.2 L687.42 207.6 L687.58 205.5 L687.74 207.9 L687.90 208.7 L688.06 199.1 L688.23 186.6 L688.39 205.5 L688.55 198.2 L688.71 213.5 L688.87 195.6 L689.03 208.8 L689.19 208.0 L689.36 213.6 L689.52 216.3 L689.68 214.4 L689.84 218.1 L690.00 220.9 L690.16 193.4 L690.32 205.7 L690.49 200.9 L690.65 205.2 L690.81 222.1 L690.97 209.3 L691.13 217.4 L691.29 216.7 L691.45 210.6 L691.62 208.2 L691.78 208.8 L691.94 208.5 L692.10 212.2 L692.26 209.4 L692.42 198.6 L692.58 190.4 L692.75 199.8 L692.91 211.6 L693.07 206.2 L693.23 201.2 L693.39 200.8 L693.55 198.9 L693.71 198.7 L693.88 206.1 L694.04 212.1 L694.20 223.2 L694.36 200.2 L694.52 204.3 L694.68 217.3 L694.84 209.6 L695.01 213.2 L695.17 213.6 L695.33 194.4 L695.49 212.9 L695.65 188.3 L695.81 211.0 L695.97 216.1 L696.14 208.6 L696.30 188.5 L696.46 211.2 L696.62 205.3 L696.78 229.8 L696.94 204.6 L697.10 222.0 L697.26 210.9 L697.43 197.8 L697.59 212.1 L697.75 203.5 L697.91 211.9 L698.07 212.9 L698.23 207.4 L698.39 200.3 L698.56 209.1 L698.72 210.1 L698.88 218.4 L699.04 224.8 L699.20 208.8 L699.36 211.6 L699.52 207.6 L699.69 200.8 L699.85 202.7 L700.01 217.8 L700.17 207.7 L700.33 207.5 L700.49 212.2 L700.65 229.9 L700.82 217.1 L700.98 210.9 L701.14 203.4 L701.30 212.9 L701.46 222.4 L701.62 198.1 L701.78 210.5 L701.95 214.2 L702.11 205.5 L702.27 204.1 L702.43 210.9 L702.59 215.4 L702.75 215.3 L702.91 203.2 L703.08 211.5 L703.24 205.9 L703.40 227.2 L703.56 214.7 L703.72 213.7 L703.88 214.5 L704.04 227.6 L704.21 214.3 L704.37 196.5 L704.53 207.7 L704.69 215.1 L704.85 216.8 L705.01 222.4 L705.17 208.4 L705.34 217.4 L705.50 214.0 L705.66 202.6 L705.82 202.1 L705.98 205.0 L706.14 225.2 L706.30 215.5 L706.47 200.1 L706.63 221.0 L706.79 199.5 L706.95 210.8 L707.11 202.2 L707.27 214.3 L707.43 221.0 L707.60 219.6 L707.76 197.7 L707.92 213.5 L708.08 221.5 L708.24 203.5 L708.40 224.4 L708.56 212.1 L708.72 207.7 L708.89 208.1 L709.05 207.0 L709.21 211.5 L709.37 232.6 L709.53 208.6 L709.69 211.2 L709.85 212.6 L710.02 206.5 L710.18 204.0 L710.34 208.9 L710.50 197.5 L710.66 191.4 L710.82 208.3 L710.98 214.0 L711.15 222.4 L711.31 205.8 L711.47 226.7 L711.63 196.0 L711.79 202.3 L711.95 215.6 L712.11 204.9 L712.28 218.7 L712.44 220.7 L712.60 204.2 L712.76 220.0 L712.92 208.8 L713.08 212.1 L713.24 197.2 L713.41 208.2 L713.57 197.0 L713.73 203.4 L713.89 217.9 L714.05 221.4 L714.21 229.8 L714.37 210.8 L714.54 234.6 L714.70 218.4 L714.86 232.5 L715.02 216.7 L715.18 204.9 L715.34 219.0 L715.50 216.1 L715.67 215.3 L715.83 208.9 L715.99 224.4 L716.15 210.3 L716.31 212.2 L716.47 220.5 L716.63 220.1 L716.80 200.6 L716.96 205.0 L717.12 207.6 L717.28 218.8 L717.44 214.5 L717.60 223.0 L717.76 227.1 L717.93 215.7 L718.09 216.8 L718.25 222.6 L718.41 222.4 L718.57 208.3 L718.73 215.7 L718.89 225.6 L719.06 193.5 L719.22 227.0 L719.38 209.8 L719.54 220.6 L719.70 205.7 L719.86 211.1 L720.02 202.7 L720.18 212.3 L720.35 218.4 L720.51 198.9 L720.67 212.3 L720.83 213.6 L720.99 213.1 L721.15 218.2 L721.31 208.7 L721.48 196.9 L721.64 198.6 L721.80 209.2 L721.96 206.1 L722.12 205.2 L722.28 217.5 L722.44 198.7 L722.61 209.7 L722.77 228.0 L722.93 206.5 L723.09 220.1 L723.25 209.3 L723.41 206.0 L723.57 214.8 L723.74 209.6 L723.90 200.1 L724.06 224.3 L724.22 228.8 L724.38 213.2 L724.54 214.3 L724.70 193.8 L724.87 203.4 L725.03 207.6 L725.19 213.2 L725.35 229.5 L725.51 224.1 L725.67 215.3 L725.83 210.8 L726.00 216.3 L726.16 211.5 L726.32 206.4 L726.48 218.9 L726.64 216.4 L726.80 221.3 L726.96 202.0 L727.13 230.7 L727.29 207.5 L727.45 206.0 L727.61 230.9 L727.77 217.2 L727.93 203.4 L728.09 221.0 L728.26 218.2 L728.42 213.5 L728.58 201.5 L728.74 207.7 L728.90 219.3 L729.06 225.5 L729.22 226.7 L729.39 210.4 L729.55 232.6 L729.71 218.6 L729.87 208.2 L730.03 224.2 L730.19 216.5 L730.35 214.6 L730.52 207.0 L730.68 225.7 L730.84 213.2 L731.00 214.3 L731.16 212.9 L731.32 227.9 L731.48 209.5 L731.64 221.5 L731.81 215.0 L731.97 221.6 L732.13 196.9 L732.29 213.6 L732.45 195.2 L732.61 219.8 L732.77 216.7 L732.94 201.2 L733.10 217.6 L733.26 210.5 L733.42 204.2 L733.58 217.7 L733.74 220.5 L733.90 216.7 L734.07 205.6 L734.23 210.8 L734.39 203.2 L734.55 217.1 L734.71 219.0 L734.87 224.8 L735.03 217.5 L735.20 220.1 L735.36 216.0 L735.52 223.3 L735.68 221.4 L735.84 217.9 L736.00 206.6 L736.16 218.1 L736.33 220.3 L736.49 206.2 L736.65 203.4 L736.81 218.0 L736.97 217.7 L737.13 231.5 L737.29 229.3 L737.46 216.0 L737.62 203.4 L737.78 199.4 L737.94 208.4 L738.10 220.1 L738.26 211.3 L738.42 228.9 L738.59 216.6 L738.75 226.4 L738.91 216.0 L739.07 203.4 L739.23 196.8 L739.39 214.3 L739.55 212.7 L739.72 230.9 L739.88 222.1 L740.04 202.9 L740.20 206.1 L740.36 209.1 L740.52 212.6 L740.68 202.0 L740.85 218.9 L741.01 218.4 L741.17 192.8 L741.33 224.4 L741.49 212.9 L741.65 220.2 L741.81 203.7 L741.98 219.3 L742.14 220.1 L742.30 219.9 L742.46 210.0 L742.62 226.1 L742.78 230.4 L742.94 218.4 L743.10 220.5 L743.27 212.7 L743.43 220.6 L743.59 222.9 L743.75 215.1 L743.91 213.9 L744.07 208.7 L744.23 217.2 L744.40 233.9 L744.56 218.3 L744.72 217.9 L744.88 218.9 L745.04 213.3 L745.20 220.6 L745.36 208.3 L745.53 220.8 L745.69 205.8 L745.85 228.1 L746.01 239.2 L746.17 227.0 L746.33 194.6 L746.49 220.8 L746.66 219.5 L746.82 216.2 L746.98 222.4 L747.14 216.3 L747.30 217.6 L747.46 200.4 L747.62 208.2 L747.79 216.4 L747.95 212.7 L748.11 213.6 L748.27 228.6 L748.43 209.1 L748.59 224.7 L748.75 212.1 L748.92 217.9 L749.08 211.2 L749.24 206.6 L749.40 214.1 L749.56 223.7 L749.72 222.2 L749.88 214.5 L750.05 223.3 L750.21 223.0 L750.37 220.7 L750.53 222.9 L750.69 215.2 L750.85 223.9 L751.01 219.1 L751.18 226.5 L751.34 235.5 L751.50 213.1 L751.66 211.5 L751.82 224.7 L751.98 213.2 L752.14 217.7 L752.31 230.8 L752.47 210.1 L752.63 238.3 L752.79 221.2 L752.95 214.4 L753.11 230.6 L753.27 206.6 L753.44 226.2 L753.60 209.9 L753.76 222.8 L753.92 215.0 L754.08 221.7 L754.24 200.2 L754.40 217.7 L754.56 212.2 L754.73 215.0 L754.89 219.7 L755.05 223.8 L755.21 217.9 L755.37 212.8 L755.53 213.6 L755.69 216.9 L755.86 222.9 L756.02 215.5 L756.18 230.7 L756.34 222.1 L756.50 240.1 L756.66 228.1 L756.82 223.5 L756.99 234.7 L757.15 232.4 L757.31 214.0 L757.47 217.9 L757.63 212.7 L757.79 212.1 L757.95 216.8 L758.12 215.5 L758.28 220.0 L758.44 211.3 L758.60 236.3 L758.76 224.3 L758.92 213.7 L759.08 215.5 L759.25 222.4 L759.41 226.0 L759.57 215.7 L759.73 224.7 L759.89 233.2 L760.05 213.0 L760.21 226.8 L760.38 221.9 L760.54 238.0 L760.70 246.4 L760.86 219.7 L761.02 209.1 L761.18 244.1 L761.34 228.5 L761.51 219.1 L761.67 222.4 L761.83 223.6 L761.99 224.5 L762.15 232.9 L762.31 214.6 L762.47 215.9 L762.64 221.3 L762.80 245.0 L762.96 209.8 L763.12 225.2 L763.28 220.1 L763.44 207.8 L763.60 213.3 L763.77 225.8 L763.93 215.5 L764.09 219.8 L764.25 230.4 L764.41 224.1 L764.57 241.0 L764.73 239.3 L764.90 223.7 L765.06 212.9 L765.22 234.3 L765.38 214.9 L765.54 224.3 L765.70 209.8 L765.86 228.9 L766.02 203.0 L766.19 221.9 L766.35 228.0 L766.51 223.8 L766.67 242.3 L766.83 223.0 L766.99 229.0 L767.15 221.8 L767.32 229.2 L767.48 250.5 L767.64 249.6 L767.80 232.4 L767.96 237.9 L768.12 218.9 L768.28 236.4 L768.45 222.9 L768.61 228.4 L768.77 213.3 L768.93 226.3 L769.09 225.4 L769.25 236.2 L769.41 224.0 L769.58 221.4 L769.74 228.5 L769.90 221.2 L770.06 236.8 L770.22 229.6 L770.38 224.1 L770.54 230.5 L770.71 216.9 L770.87 222.2 L771.03 233.4 L771.19 236.3 L771.35 228.1 L771.51 234.6 L771.67 231.7 L771.84 238.2 L772.00 221.4 L772.16 226.8 L772.32 225.7 L772.48 221.2 L772.64 249.0 L772.80 228.3 L772.97 230.8 L773.13 222.7 L773.29 224.3 L773.45 224.2 L773.61 217.3 L773.77 245.6 L773.93 238.5 L774.10 218.3 L774.26 216.3 L774.42 236.4 L774.58 219.3 L774.74 221.5 L774.90 241.5 L775.06 234.8 L775.23 226.5 L775.39 230.2 L775.55 213.6 L775.71 224.3 L775.87 221.7 L776.03 235.6 L776.19 240.7 L776.36 235.3 L776.52 217.4 L776.68 213.6 L776.84 237.3 L777.00 231.4 L777.16 252.3 L777.32 218.8 L777.48 241.5 L777.65 222.4 L777.81 219.0 L777.97 242.3 L778.13 238.3 L778.29 224.2 L778.45 218.5 L778.61 235.4 L778.78 240.1 L778.94 227.8 L779.10 219.6 L779.26 240.8 L779.42 238.0 L779.58 220.7 L779.74 229.4 L779.91 238.5 L780.07 231.2 L780.23 227.1 L780.39 222.3 L780.55 228.8 L780.71 231.6 L780.87 246.5 L781.04 226.8 L781.20 227.1 L781.36 229.9 L781.52 231.6 L781.68 230.7 L781.84 223.4 L782.00 235.2 L782.17 242.7 L782.33 224.1 L782.49 235.5 L782.65 234.7 L782.81 228.4 L782.97 234.5 L783.13 233.0 L783.30 242.3 L783.46 220.9 L783.62 244.4 L783.78 220.9 L783.94 243.9 L784.10 239.0 L784.26 236.5 L784.43 225.0 L784.59 231.1 L784.75 237.0 L784.91 244.1 L785.07 224.2 L785.23 232.8 L785.39 229.4 L785.56 234.9 L785.72 237.7 L785.88 227.4 L786.04 230.7 L786.20 223.3 L786.36 231.7 L786.52 246.0 L786.69 226.7 L786.85 233.1 L787.01 235.7 L787.17 257.6 L787.33 241.4 L787.49 232.3 L787.65 239.4 L787.82 231.6 L787.98 228.6 L788.14 234.1 L788.30 242.4 L788.46 230.3 L788.62 230.9 L788.78 236.4 L788.94 251.1 L789.11 245.3 L789.27 227.3 L789.43 236.7 L789.59 250.4 L789.75 236.2 L789.91 234.2 L790.07 229.0 L790.24 230.9 L790.40 231.4 L790.56 241.7" stroke="#f3e162" stroke-width="0.9" stroke-opacity="1" fill="none" stroke-linejoin="bevel" clip-path="url(#cp)"/>
<g font-family="Liberation Sans, Arial, sans-serif" font-size="10.67" fill="#bababa" stroke="#bababa" stroke-width="0.3"><text x="43.5" y="52.2" text-anchor="end">20</text><text x="43.5" y="89.9" text-anchor="end">10</text><text x="43.5" y="127.6" text-anchor="end">0</text><text x="43.5" y="165.4" text-anchor="end">-10</text><text x="43.5" y="203.1" text-anchor="end">-20</text><text x="43.5" y="240.8" text-anchor="end">-30</text><text x="43.5" y="278.5" text-anchor="end">-40</text><text x="74.2" y="299.3" text-anchor="middle">-400</text><text x="246.8" y="299.3" text-anchor="middle">-200</text><text x="419.4" y="299.3" text-anchor="middle">0</text><text x="592.0" y="299.3" text-anchor="middle">200</text><text x="764.6" y="299.3" text-anchor="middle">400</text></g>
<g font-family="Liberation Sans, Arial, sans-serif" font-size="13" fill="#bababa" stroke="#bababa" stroke-width="0.15">
<text x="419" y="315.5" text-anchor="middle">Frequency (MHz)</text>
<text transform="translate(16.6 161) rotate(-90)" text-anchor="middle">Power (dBm)</text>
</g>
</svg>
<div class="abs" style="left:0;top:326px;width:810px;height:1px;background:#151515"></div>
<div class="abs" id="acprbar"><span style="position:absolute;left:26px">ACPR</span></div>
<div class="abs" id="tbl">
<div class="gl" style="left:0;top:-1px;width:810px;height:1px;background:#c2c2c2"></div><div class="gl" style="left:0;top:0;width:810px;height:1px;background:#868686"></div>
<div class="gl" style="left:0;top:0;width:1px;height:75px;background:#8a8a8a"></div>
<div class="gl" style="left:809px;top:0;width:1px;height:75px;background:#8a8a8a"></div>
<div class="gl" style="left:1px;top:27px;width:808px;height:1px"></div>
<div class="gl" style="left:1px;top:49px;width:791px;height:1px"></div>
<div class="gl" style="left:399px;top:1px;width:1px;height:55px"></div>
<div class="abs" style="left:797px;top:1px;width:12px;height:26px;background:#f4f4f4"></div>
<div class="abs" style="left:792px;top:28px;width:17px;height:28px;background:#f0f0f0"></div>
<svg class="abs" style="left:792px;top:28px" width="17" height="28" viewBox="0 0 17 28"><path d="M4.5 10.5L8.5 6L12.5 10.5Z" fill="#a6a6a6"/><path d="M4.8 19L8.5 23L12.2 19Z" fill="#505050"/></svg>
<div class="cell" style="left:4.5px;top:7.2px;font-weight:bold;font-size:12px;color:#cdcdcd;transform:scaleX(0.9);transform-origin:0 0;-webkit-text-stroke:0.25px #cdcdcd">TX</div>
<div class="cell" style="left:403px;top:7.2px;font-weight:bold;font-size:12px;color:#cdcdcd;transform:scaleX(0.895);transform-origin:0 0;-webkit-text-stroke:0.25px #cdcdcd">ACPR1</div>
<div class="cell" style="left:4.5px;top:32px">Frequency (MHz)</div>
</div>
<div class="abs" id="hs">
<div class="abs" style="left:17px;top:2px;width:752px;height:13px;background:#c1c1c1"></div>
<div class="abs" style="left:791px;top:0;width:17px;height:17px;background:#dcdcdc"></div>
<svg class="abs" style="left:0;top:0" width="808" height="17" viewBox="0 0 808 17"><path d="M10 4.9L5.8 8.4L10 11.9Z" fill="#a3a3a3"/><path d="M781 4.5L785.5 8.5L781 12.5Z" fill="#505050"/></svg>
</div>
<div class="abs" style="left:0;top:424px;width:810px;height:2px;background:#8c8c8c"></div>
<div class="abs" style="left:0;top:407px;width:1px;height:19px;background:#8a8a8a"></div>
<div class="abs" style="left:809px;top:407px;width:1px;height:19px;background:#8a8a8a"></div>
<div class="abs" id="status">
<span class="abs" style="left:7.3px;top:0;font-size:11.6px">Ready</span>
<span class="abs" style="left:78.3px;top:0;width:709.5px;overflow:hidden;white-space:pre">ΔT=6.3492 us  Samples/Update=8192  VBW=11.1408 kHz  RBW=157.5000 kHz  Sample Rate=860.1600 MHz  Updates=22  T=0.0002</span>
<svg class="abs" style="left:793px;top:6px" width="14" height="11" viewBox="0 0 14 11"><path d="M1.3 1.4H12.9L7.1 7.4Z" fill="#a0a0a0"/><rect x="1.3" y="8" width="11.6" height="1.8" fill="#a0a0a0"/></svg>
</div>
</body></html>
